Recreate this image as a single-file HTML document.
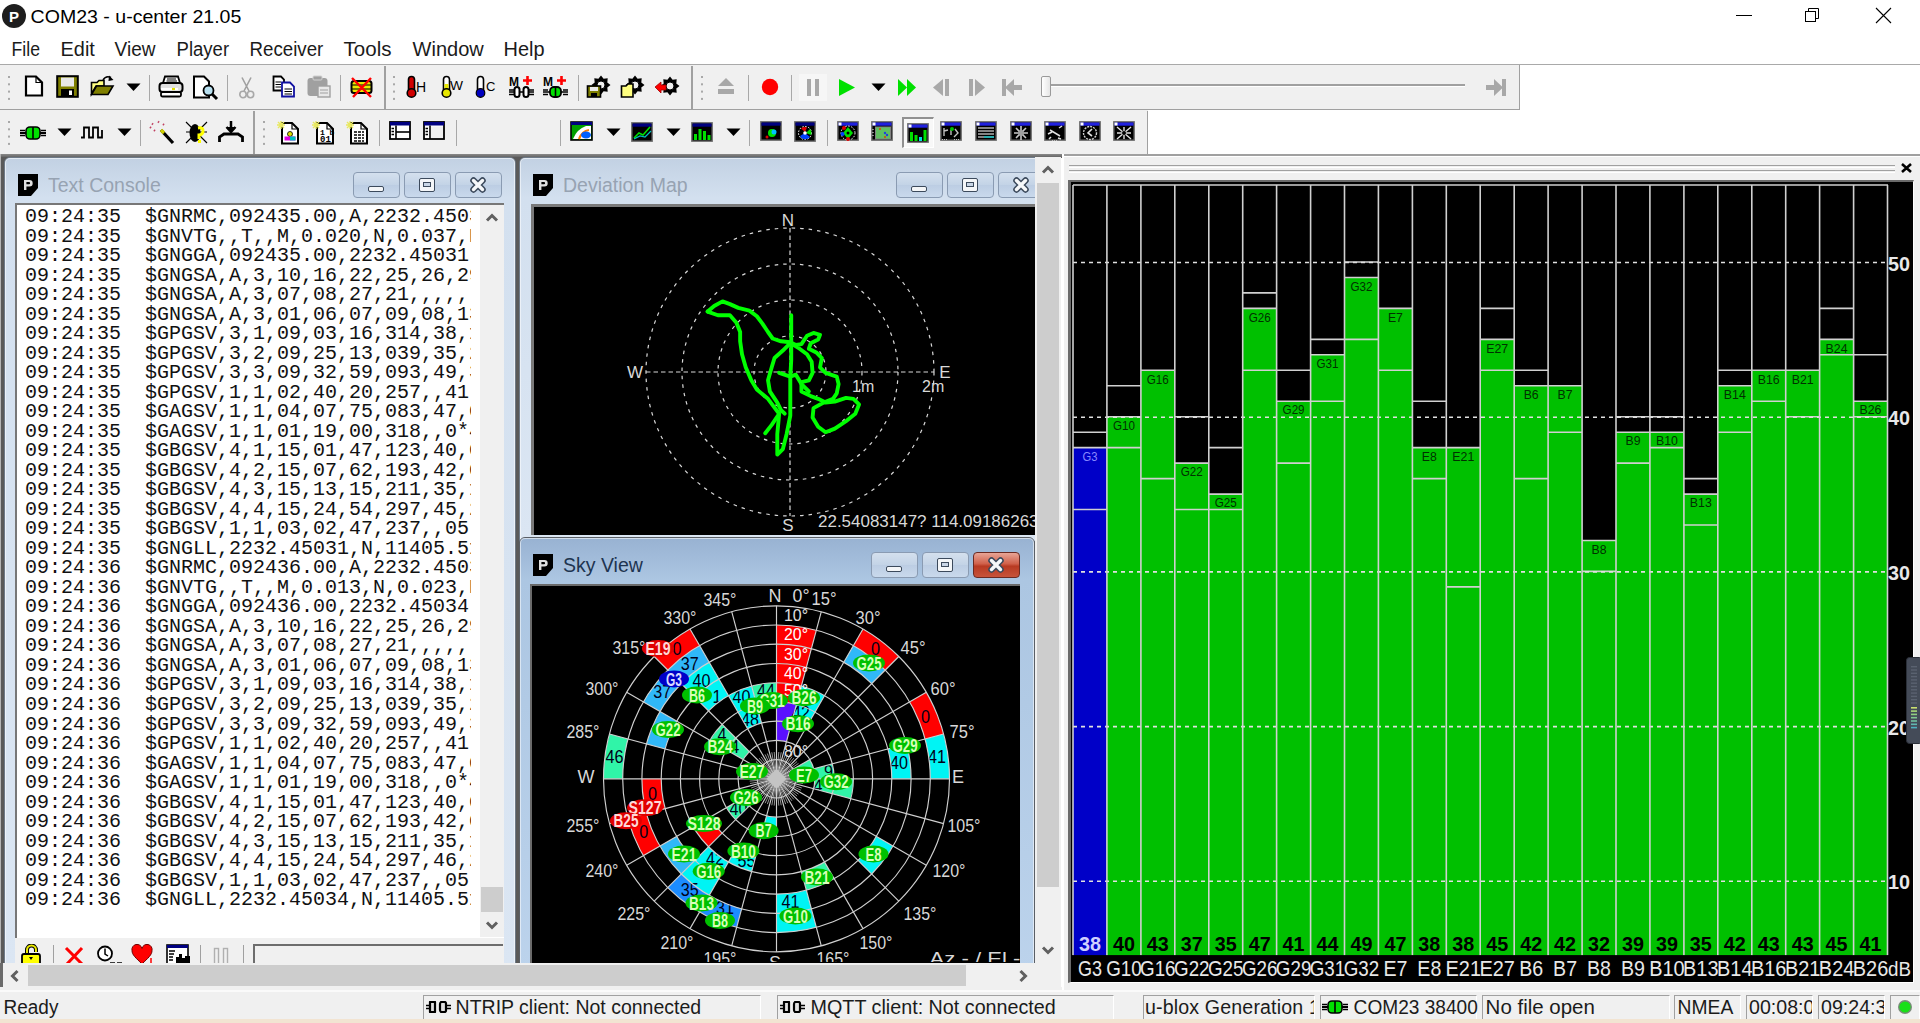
<!DOCTYPE html><html><head><meta charset="utf-8"><style>
*{margin:0;padding:0;box-sizing:border-box}
html,body{width:1920px;height:1023px;overflow:hidden;background:#fff;font-family:"Liberation Sans",sans-serif;color:#000}
.a{position:absolute}
.t{position:absolute;white-space:pre;line-height:1}
</style></head><body><svg class="a" style="left:0;top:0" width="32" height="32"><circle cx="14" cy="16" r="12" fill="#1e1e1e"/><text x="14" y="21.5" font-size="15" font-weight="bold" fill="#fff" text-anchor="middle" font-family="Liberation Sans">P</text></svg>
<svg class="a" style="left:28.4px;top:1.7px;overflow:visible" width="216.7" height="26.6"><text x="2.6" y="20.9" font-size="19" font-family="Liberation Sans" font-weight="normal" fill="#000" textLength="210.7" lengthAdjust="spacingAndGlyphs">COM23 - u-center 21.05</text></svg>
<div class="a" style="left:1736px;top:15px;width:16px;height:1px;background:#000"></div>
<svg class="a" style="left:1800px;top:4px" width="26" height="24"><rect x="5.5" y="7.5" width="10" height="10" fill="none" stroke="#000"/><path d="M8.5 7.5V4.5H18.5V14.5H15.5" fill="none" stroke="#000"/></svg>
<svg class="a" style="left:1872px;top:4px" width="24" height="24"><path d="M4 4L19 19M19 4L4 19" stroke="#000" stroke-width="1.1"/></svg>
<svg class="a" style="left:8.7px;top:33.5px;overflow:visible" width="34.4" height="27.3"><text x="2.6" y="21.5" font-size="19.5" font-family="Liberation Sans" font-weight="normal" fill="#1b1b1b" textLength="28.4" lengthAdjust="spacingAndGlyphs">File</text></svg>
<svg class="a" style="left:57.5px;top:33.5px;overflow:visible" width="40.3" height="27.3"><text x="2.6" y="21.5" font-size="19.5" font-family="Liberation Sans" font-weight="normal" fill="#1b1b1b" textLength="34.3" lengthAdjust="spacingAndGlyphs">Edit</text></svg>
<svg class="a" style="left:112.2px;top:33.5px;overflow:visible" width="46.9" height="27.3"><text x="2.6" y="21.5" font-size="19.5" font-family="Liberation Sans" font-weight="normal" fill="#1b1b1b" textLength="40.9" lengthAdjust="spacingAndGlyphs">View</text></svg>
<svg class="a" style="left:173.5px;top:33.5px;overflow:visible" width="58.5" height="27.3"><text x="2.6" y="21.5" font-size="19.5" font-family="Liberation Sans" font-weight="normal" fill="#1b1b1b" textLength="52.5" lengthAdjust="spacingAndGlyphs">Player</text></svg>
<svg class="a" style="left:246.8px;top:33.5px;overflow:visible" width="79.7" height="27.3"><text x="2.6" y="21.5" font-size="19.5" font-family="Liberation Sans" font-weight="normal" fill="#1b1b1b" textLength="73.7" lengthAdjust="spacingAndGlyphs">Receiver</text></svg>
<svg class="a" style="left:341.3px;top:33.5px;overflow:visible" width="53.9" height="27.3"><text x="2.6" y="21.5" font-size="19.5" font-family="Liberation Sans" font-weight="normal" fill="#1b1b1b" textLength="47.9" lengthAdjust="spacingAndGlyphs">Tools</text></svg>
<svg class="a" style="left:410.0px;top:33.5px;overflow:visible" width="77.2" height="27.3"><text x="2.6" y="21.5" font-size="19.5" font-family="Liberation Sans" font-weight="normal" fill="#1b1b1b" textLength="71.2" lengthAdjust="spacingAndGlyphs">Window</text></svg>
<svg class="a" style="left:501.2px;top:33.5px;overflow:visible" width="47.0" height="27.3"><text x="2.6" y="21.5" font-size="19.5" font-family="Liberation Sans" font-weight="normal" fill="#1b1b1b" textLength="41.0" lengthAdjust="spacingAndGlyphs">Help</text></svg>
<div class="a" style="left:0px;top:64px;width:1920px;height:1px;background:#a9a9a9"></div>
<div class="a" style="left:0px;top:65px;width:1520px;height:44px;background:#f0f0f0"></div>
<div class="a" style="left:1519px;top:65px;width:1px;height:44px;background:#a0a0a0"></div>
<div class="a" style="left:0px;top:109px;width:1520px;height:1px;background:#a0a0a0"></div>
<div class="a" style="left:0px;top:110px;width:1148px;height:44px;background:#f0f0f0"></div>
<div class="a" style="left:1147px;top:111px;width:1px;height:43px;background:#a0a0a0"></div>
<div class="a" style="left:384px;top:66px;width:2px;height:43px;background:#a0a0a0"></div>
<div class="a" style="left:691px;top:66px;width:2px;height:43px;background:#a0a0a0"></div>
<div class="a" style="left:253px;top:111px;width:2px;height:43px;background:#a0a0a0"></div>
<div class="a" style="left:0px;top:154px;width:1062px;height:4px;background:linear-gradient(#8a8a8a,#5a5a5a)"></div>
<div class="a" style="left:1062px;top:154px;width:858px;height:2px;background:#a0a0a0"></div>
<div class="a" style="left:1062px;top:156px;width:858px;height:1px;background:#fff"></div>
<svg class="a" style="left:7px;top:75px" width="5" height="28"><rect x="1" y="1.0" width="2" height="2" fill="#a8a8a8"/><rect x="1" y="8.3" width="2" height="2" fill="#a8a8a8"/><rect x="1" y="15.6" width="2" height="2" fill="#a8a8a8"/><rect x="1" y="22.9" width="2" height="2" fill="#a8a8a8"/></svg>
<svg class="a" style="left:24px;top:75px" width="20" height="22"><path d="M2 1.5H12L18 7.5V20.5H2Z" fill="#fff" stroke="#000" stroke-width="2.2" stroke-linejoin="miter"/><path d="M12 1.5V7.5H18" fill="none" stroke="#000" stroke-width="1.2"/></svg>
<svg class="a" style="left:56px;top:75px" width="23" height="23"><rect x="1.2" y="1.2" width="20.6" height="20.6" fill="#808000" stroke="#000" stroke-width="2"/><rect x="5" y="2.5" width="13" height="9" fill="#e8e8e8"/><rect x="5" y="14" width="13" height="7" fill="#000"/><rect x="13" y="15.5" width="3" height="4.5" fill="#fff"/></svg>
<svg class="a" style="left:90px;top:74px" width="26" height="23"><path d="M1.5 8.5H7L9 6.5H14V12H6L1.5 20Z" fill="#ffff80" stroke="#000" stroke-width="1.6"/><path d="M1.5 20.5L6.5 12H23L18 20.5Z" fill="#808000" stroke="#000" stroke-width="1.6"/><path d="M13 6Q16 1 21 3.5" fill="none" stroke="#000" stroke-width="1.5"/><path d="M19 1.5L23.5 6L18.5 7Z" fill="#000"/></svg>
<svg class="a" style="left:126px;top:83px" width="15" height="9"><path d="M0.5 0.5H14.5L7.5 8Z" fill="#000"/></svg>
<div class="a" style="left:149px;top:75px;width:1px;height:26px;background:#a8a8a8"></div>
<svg class="a" style="left:158px;top:75px" width="27" height="23"><path d="M7 1.5H20L22 8H5Z" fill="#fff" stroke="#000" stroke-width="1.8"/><path d="M9 4H18M8.5 6H19" stroke="#000" stroke-width="1"/><rect x="1.5" y="8" width="23" height="9" rx="3" fill="#e0e0e0" stroke="#000" stroke-width="2"/><path d="M3 14H20" stroke="#fff" stroke-width="2.2"/><path d="M14 14H17" stroke="#e0e000" stroke-width="2.2"/><rect x="3" y="17" width="20" height="4.5" rx="1.5" fill="#fff" stroke="#000" stroke-width="1.8"/></svg>
<svg class="a" style="left:192px;top:75px" width="28" height="26"><path d="M2 1.5H12L17 6.5V22.5H2Z" fill="#fff" stroke="#000" stroke-width="2"/><circle cx="16.5" cy="15.5" r="5" fill="#b8e0f0" stroke="#000" stroke-width="1.8"/><path d="M20 19L25 24" stroke="#000" stroke-width="3"/></svg>
<div class="a" style="left:227px;top:75px;width:1px;height:26px;background:#a8a8a8"></div>
<svg class="a" style="left:238px;top:76px" width="18" height="23"><path d="M4 1.5L11 15M13 1.5L6 15" stroke="#a0a0a0" stroke-width="1.6" fill="none"/><circle cx="5" cy="18.5" r="3.2" fill="none" stroke="#a8a8a8" stroke-width="1.6"/><circle cx="12.5" cy="18.5" r="3.2" fill="none" stroke="#a8a8a8" stroke-width="1.6"/></svg>
<svg class="a" style="left:272px;top:75px" width="26" height="23"><path d="M1.5 1.5H9L12 4.5V15.5H1.5Z" fill="#fff" stroke="#000" stroke-width="1.8"/><path d="M3.5 7H9M3.5 9.5H9M3.5 12H9" stroke="#000" stroke-width="1"/><path d="M10 7.5H18L22 11.5V21.5H10Z" fill="#fff" stroke="#1010a0" stroke-width="1.8"/><path d="M12.5 14H20M12.5 16.5H20M12.5 19H20" stroke="#000" stroke-width="1"/></svg>
<svg class="a" style="left:306px;top:75px" width="26" height="24"><rect x="1.5" y="3" width="20" height="18" rx="3" fill="#a0a0a0"/><rect x="7" y="1" width="9" height="4" rx="1" fill="#a0a0a0" stroke="#d0d0d0"/><rect x="12" y="11" width="12" height="11" fill="#e8e8e8" stroke="#a0a0a0" stroke-width="1.4"/><path d="M14 15H22M14 18H22" stroke="#a0a0a0"/></svg>
<div class="a" style="left:340px;top:75px;width:1px;height:26px;background:#a8a8a8"></div>
<svg class="a" style="left:350px;top:76px" width="24" height="22"><rect x="1.5" y="5" width="20" height="12" rx="2.5" fill="#e8e800" stroke="#000" stroke-width="2"/><path d="M2 9H21M2 13H21" stroke="#000" stroke-width="1.2"/><path d="M2 2L21 21M21 2L3 21" stroke="#ff0000" stroke-width="2.4"/></svg>
<svg class="a" style="left:392px;top:75px" width="5" height="28"><rect x="1" y="1.0" width="2" height="2" fill="#a8a8a8"/><rect x="1" y="8.3" width="2" height="2" fill="#a8a8a8"/><rect x="1" y="15.6" width="2" height="2" fill="#a8a8a8"/><rect x="1" y="22.9" width="2" height="2" fill="#a8a8a8"/></svg>
<svg class="a" style="left:404px;top:75px" width="24" height="24"><rect x="4.5" y="1.5" width="6" height="17" rx="3" fill="#d00000" stroke="#000" stroke-width="1.6"/><circle cx="7.5" cy="18" r="4.3" fill="#d00000" stroke="#000" stroke-width="1.6"/><text x="12" y="17" font-size="14" font-family="Liberation Sans" fill="#000">H</text></svg>
<svg class="a" style="left:439px;top:75px" width="26" height="24"><rect x="4.5" y="1.5" width="6" height="17" rx="3" fill="#fff" stroke="#000" stroke-width="1.6"/><rect x="5.5" y="9" width="4" height="9" fill="#e8e800"/><circle cx="7.5" cy="18" r="4.3" fill="#e8e800" stroke="#000" stroke-width="1.6"/><text x="11" y="15" font-size="13" font-family="Liberation Sans" fill="#000" textLength="13" lengthAdjust="spacingAndGlyphs">W</text></svg>
<svg class="a" style="left:473px;top:75px" width="24" height="24"><rect x="4.5" y="1.5" width="6" height="17" rx="3" fill="#fff" stroke="#000" stroke-width="1.6"/><circle cx="7.5" cy="18" r="4.3" fill="#0000c0" stroke="#000" stroke-width="1.2"/><text x="13" y="16" font-size="13" font-family="Liberation Sans" fill="#000">C</text></svg>
<svg class="a" style="left:509px;top:75px" width="26" height="24"><text x="0" y="11" font-size="12" font-weight="bold" font-family="Liberation Sans" fill="#000">M</text><path d="M18.5 1V10M14 5.5H23" stroke="#ff0000" stroke-width="2.6"/><path d="M0 17H25M0 15H5M0 19.5H5M20 15H25M20 19.5H25" stroke="#000" stroke-width="1.3"/><rect x="5.5" y="12" width="5" height="10" rx="2.5" fill="#fff" stroke="#000" stroke-width="2"/><rect x="14.5" y="12" width="5" height="10" rx="2.5" fill="#fff" stroke="#000" stroke-width="2"/></svg>
<svg class="a" style="left:543px;top:75px" width="26" height="24"><text x="0" y="11" font-size="12" font-weight="bold" font-family="Liberation Sans" fill="#000">M</text><path d="M18.5 1V10M14 5.5H23" stroke="#ff0000" stroke-width="2.6"/><path d="M0 17H25M0 15H5M0 19.5H5M20 15H25M20 19.5H25" stroke="#000" stroke-width="1.3"/><rect x="7" y="12" width="11" height="10" rx="4" fill="#00e000" stroke="#000" stroke-width="1.8"/><path d="M12.5 12V22" stroke="#000" stroke-width="1.6"/></svg>
<div class="a" style="left:578px;top:75px;width:1px;height:26px;background:#a8a8a8"></div>
<svg class="a" style="left:586px;top:75px" width="26" height="24"><polygon points="24.5,10.0 21.3,12.6 21.7,16.7 17.6,16.3 15.0,19.5 12.4,16.3 8.3,16.7 8.7,12.6 5.5,10.0 8.7,7.4 8.3,3.3 12.4,3.7 15.0,0.5 17.6,3.7 21.7,3.3 21.3,7.4" fill="#000"/><circle cx="15" cy="10" r="4.0" fill="#f0f0f0" stroke="#000" stroke-width="1"/><rect x="1.5" y="11" width="13" height="11" fill="#808000" stroke="#000" stroke-width="1.6"/><rect x="4" y="12" width="8" height="4" fill="#e8e8e8"/><rect x="5" y="18" width="6" height="4" fill="#000"/></svg>
<svg class="a" style="left:620px;top:75px" width="26" height="24"><polygon points="24.5,10.0 21.3,12.6 21.7,16.7 17.6,16.3 15.0,19.5 12.4,16.3 8.3,16.7 8.7,12.6 5.5,10.0 8.7,7.4 8.3,3.3 12.4,3.7 15.0,0.5 17.6,3.7 21.7,3.3 21.3,7.4" fill="#000"/><circle cx="15" cy="10" r="4.0" fill="#f0f0f0" stroke="#000" stroke-width="1"/><path d="M1.5 11H6L8 9H13V22H1.5Z" fill="#ffff80" stroke="#000" stroke-width="1.6"/></svg>
<svg class="a" style="left:654px;top:75px" width="28" height="24"><polygon points="25.5,11.0 22.3,13.6 22.7,17.7 18.6,17.3 16.0,20.5 13.4,17.3 9.3,17.7 9.7,13.6 6.5,11.0 9.7,8.4 9.3,4.3 13.4,4.7 16.0,1.5 18.6,4.7 22.7,4.3 22.3,8.4" fill="#000"/><circle cx="16" cy="11" r="4.0" fill="#f0f0f0" stroke="#000" stroke-width="1"/><path d="M1 12L7 7V10H12V15H7V18Z" fill="#ff0000" stroke="#a00000" stroke-width="0.8"/></svg>
<svg class="a" style="left:700px;top:75px" width="5" height="28"><rect x="1" y="1.0" width="2" height="2" fill="#a8a8a8"/><rect x="1" y="8.3" width="2" height="2" fill="#a8a8a8"/><rect x="1" y="15.6" width="2" height="2" fill="#a8a8a8"/><rect x="1" y="22.9" width="2" height="2" fill="#a8a8a8"/></svg>
<svg class="a" style="left:717px;top:77px" width="20" height="19"><path d="M1 9L9 1L17 9Z" fill="#a8a8a8"/><rect x="1" y="12" width="16" height="5" fill="#a8a8a8"/></svg>
<div class="a" style="left:748px;top:75px;width:1px;height:26px;background:#a8a8a8"></div>
<svg class="a" style="left:760px;top:77px" width="20" height="20"><circle cx="10" cy="10" r="8.2" fill="#ff0000"/></svg>
<div class="a" style="left:791px;top:75px;width:1px;height:26px;background:#a8a8a8"></div>
<div class="a" style="left:799px;top:74px;width:28px;height:27px;background:#f6f6f6"></div>
<svg class="a" style="left:805px;top:78px" width="18" height="19"><rect x="2" y="1" width="4" height="17" fill="#a8a8a8"/><rect x="10" y="1" width="4" height="17" fill="#a8a8a8"/></svg>
<svg class="a" style="left:838px;top:78px" width="20" height="20"><path d="M1 1L17 9.5L1 18Z" fill="#00e000"/></svg>
<svg class="a" style="left:871px;top:83px" width="15" height="9"><path d="M0.5 0.5H14.5L7.5 8Z" fill="#000"/></svg>
<svg class="a" style="left:897px;top:78px" width="22" height="20"><path d="M1 1L10 9.5L1 18Z" fill="#00e000"/><path d="M10 1L19 9.5L10 18Z" fill="#00e000"/></svg>
<svg class="a" style="left:932px;top:78px" width="20" height="20"><path d="M11 1L1 9.5L11 18Z" fill="#a8a8a8"/><rect x="13" y="1" width="4" height="17" fill="#a8a8a8"/></svg>
<svg class="a" style="left:968px;top:78px" width="20" height="20"><rect x="1" y="1" width="4" height="17" fill="#a8a8a8"/><path d="M7 1L17 9.5L7 18Z" fill="#a8a8a8"/></svg>
<svg class="a" style="left:1001px;top:78px" width="24" height="20"><rect x="1" y="1" width="4" height="17" fill="#a8a8a8"/><path d="M13 1L4 9.5L13 18Z" fill="#a8a8a8"/><rect x="11" y="7" width="10" height="5" fill="#a8a8a8"/></svg>
<div class="a" style="left:1050px;top:84px;width:415px;height:3px;background:#a0a0a0;border-bottom:1px solid #fff"></div>
<div class="a" style="left:1041px;top:76px;width:10px;height:21px;background:linear-gradient(90deg,#fff,#e6e6e6);border:1px solid #9a9a9a;border-radius:2px"></div>
<svg class="a" style="left:1483px;top:78px" width="24" height="20"><rect x="3" y="7" width="10" height="5" fill="#a8a8a8"/><path d="M11 1L20 9.5L11 18Z" fill="#a8a8a8"/><rect x="19" y="1" width="4" height="17" fill="#a8a8a8"/></svg>
<svg class="a" style="left:7px;top:120px" width="5" height="28"><rect x="1" y="1.0" width="2" height="2" fill="#a8a8a8"/><rect x="1" y="8.3" width="2" height="2" fill="#a8a8a8"/><rect x="1" y="15.6" width="2" height="2" fill="#a8a8a8"/><rect x="1" y="22.9" width="2" height="2" fill="#a8a8a8"/></svg>
<svg class="a" style="left:20px;top:126px" width="26" height="14"><path d="M0 7H26" stroke="#000" stroke-width="2"/><path d="M0 4.5H5M0 9.5H5M21 4.5H26M21 9.5H26" stroke="#000" stroke-width="1.3"/><rect x="6" y="1" width="14" height="12" rx="4" fill="#00e000" stroke="#000" stroke-width="1.6"/><path d="M13 1V13" stroke="#000" stroke-width="1.6"/></svg>
<svg class="a" style="left:57px;top:128px" width="15" height="9"><path d="M0.5 0.5H14.5L7.5 8Z" fill="#000"/></svg>
<svg class="a" style="left:80px;top:126px" width="24" height="13"><path d="M1 11.5H4V1.5H9V11.5H13V1.5H18V11.5H22V4" fill="none" stroke="#000" stroke-width="1.8"/></svg>
<svg class="a" style="left:117px;top:128px" width="15" height="9"><path d="M0.5 0.5H14.5L7.5 8Z" fill="#000"/></svg>
<div class="a" style="left:140px;top:120px;width:1px;height:26px;background:#a8a8a8"></div>
<svg class="a" style="left:149px;top:120px" width="27" height="25"><path d="M12 10L24 23" stroke="#000" stroke-width="3.2"/><path d="M12 10L15 13" stroke="#d0d000" stroke-width="3.2"/><path d="M3 3.5l1 1M9 1.5l1 1M5 10l1 1M14 4l1 1M1 7l1 1" stroke="#c04060" stroke-width="1.8"/></svg>
<svg class="a" style="left:185px;top:120px" width="24" height="25"><path d="M1 2L22 23M22 2L1 23M1 12H22" stroke="#000" stroke-width="1.1"/><ellipse cx="10" cy="13" rx="5.5" ry="9" fill="#000"/><path d="M13 8Q19 7 18 12Q17 15 14 15V19" fill="none" stroke="#ffff00" stroke-width="3"/><rect x="13" y="20" width="3" height="3" fill="#ffff00"/></svg>
<svg class="a" style="left:218px;top:120px" width="27" height="24"><path d="M13 1V11M8.5 7L13 12L17.5 7" fill="#000" stroke="#000" stroke-width="2.5"/><path d="M1.5 22V17L6 14H20L24.5 17V22" fill="none" stroke="#000" stroke-width="2.8"/></svg>
<svg class="a" style="left:262px;top:120px" width="5" height="28"><rect x="1" y="1.0" width="2" height="2" fill="#a8a8a8"/><rect x="1" y="8.3" width="2" height="2" fill="#a8a8a8"/><rect x="1" y="15.6" width="2" height="2" fill="#a8a8a8"/><rect x="1" y="22.9" width="2" height="2" fill="#a8a8a8"/></svg>
<svg class="a" style="left:276px;top:120px" width="26" height="25"><path d="M6 3H16L22 9V23.5H6Z" fill="#fff" stroke="#000" stroke-width="2"/><path d="M16 3V9H22" fill="none" stroke="#000" stroke-width="1.2"/><path d="M1 5L9 5M5 1V9M2 2L8 8M8 2L2 8" stroke="#e8e860" stroke-width="1.4"/><circle cx="14" cy="14" r="2.5" fill="#e0e000" stroke="#000" stroke-width=".8"/><rect x="8.5" y="16.5" width="11" height="4" fill="#e000e0"/><rect x="14" y="16.5" width="5.5" height="4" fill="#00c0c0"/></svg>
<svg class="a" style="left:311px;top:120px" width="26" height="25"><path d="M6 3H16L22 9V23.5H6Z" fill="#fff" stroke="#000" stroke-width="2"/><path d="M16 3V9H22" fill="none" stroke="#000" stroke-width="1.2"/><path d="M1 5L9 5M5 1V9M2 2L8 8M8 2L2 8" stroke="#e8e860" stroke-width="1.4"/><text x="9" y="15" font-size="8" font-weight="bold" font-family="Liberation Mono">1 b</text><text x="9" y="22" font-size="9" font-weight="bold" font-family="Liberation Mono">01</text></svg>
<svg class="a" style="left:345px;top:120px" width="26" height="25"><path d="M6 3H16L22 9V23.5H6Z" fill="#fff" stroke="#000" stroke-width="2"/><path d="M16 3V9H22" fill="none" stroke="#000" stroke-width="1.2"/><path d="M1 5L9 5M5 1V9M2 2L8 8M8 2L2 8" stroke="#e8e860" stroke-width="1.4"/><path d="M9 12H19M9 15H19M9 18H19M9 21H19" stroke="#000" stroke-width="1.6" stroke-dasharray="3 1"/></svg>
<div class="a" style="left:379px;top:120px;width:1px;height:26px;background:#a8a8a8"></div>
<svg class="a" style="left:389px;top:121px" width="23" height="20"><rect x="1" y="1" width="20" height="17" fill="#fff" stroke="#000" stroke-width="1.8"/><rect x="1" y="1" width="20" height="3.5" fill="#000080"/><path d="M7 4.5V18" stroke="#000" stroke-width="1.6"/><path d="M2.5 7.5H5M2.5 10.5H5M2.5 13.5H5" stroke="#000" stroke-width="1.4"/><path d="M7 11H21" stroke="#000" stroke-width="1.6"/></svg>
<svg class="a" style="left:423px;top:121px" width="23" height="20"><rect x="1" y="1" width="20" height="17" fill="#fff" stroke="#000" stroke-width="1.8"/><rect x="1" y="1" width="20" height="3.5" fill="#000080"/><path d="M7 4.5V18" stroke="#000" stroke-width="1.6"/><path d="M2.5 7.5H5M2.5 10.5H5M2.5 13.5H5" stroke="#000" stroke-width="1.4"/><rect x="8" y="5.5" width="12" height="11.5" fill="#f0f0f0"/></svg>
<div class="a" style="left:456px;top:120px;width:1px;height:26px;background:#a8a8a8"></div>
<div class="a" style="left:560px;top:120px;width:1px;height:26px;background:#a8a8a8"></div>
<svg class="a" style="left:570px;top:121px" width="24" height="21"><rect x="1" y="1" width="21" height="18" fill="#00a000" stroke="#000" stroke-width="1.6"/><rect x="1" y="1" width="21" height="3" fill="#000080"/><path d="M3 18Q7 8 16 5L21 5V18Z" fill="#fff"/><path d="M9 18Q12 10 19 9" stroke="#ff8000" stroke-width="2.2" fill="none"/><ellipse cx="16" cy="14" rx="5" ry="3.5" fill="#0060ff"/></svg>
<svg class="a" style="left:606px;top:128px" width="15" height="9"><path d="M0.5 0.5H14.5L7.5 8Z" fill="#000"/></svg>
<svg class="a" style="left:631px;top:122px" width="22" height="20"><rect x="0.8" y="0.8" width="20.4" height="18.4" fill="#000" stroke="#707070" stroke-width="1.4"/><rect x="1.5" y="1.5" width="19" height="3.2" fill="#000080"/><path d="M3 16L8 11L12 13L19 5" stroke="#00e000" stroke-width="1.6" fill="none"/><path d="M3 17L9 14L14 15L20 9" stroke="#00c0c0" stroke-width="1.2" fill="none"/></svg>
<svg class="a" style="left:666px;top:128px" width="15" height="9"><path d="M0.5 0.5H14.5L7.5 8Z" fill="#000"/></svg>
<svg class="a" style="left:691px;top:122px" width="22" height="20"><rect x="0.8" y="0.8" width="20.4" height="18.4" fill="#000" stroke="#707070" stroke-width="1.4"/><rect x="1.5" y="1.5" width="19" height="3.2" fill="#000080"/><rect x="3" y="12" width="3" height="6" fill="#00e000"/><rect x="7.5" y="7" width="3" height="11" fill="#00e000"/><rect x="12" y="9" width="3" height="9" fill="#00e000"/><rect x="16.5" y="13" width="3" height="5" fill="#00e000"/></svg>
<svg class="a" style="left:726px;top:128px" width="15" height="9"><path d="M0.5 0.5H14.5L7.5 8Z" fill="#000"/></svg>
<div class="a" style="left:749px;top:120px;width:1px;height:26px;background:#a8a8a8"></div>
<svg class="a" style="left:760px;top:121px" width="22" height="20"><rect x="0.8" y="0.8" width="20.4" height="18.4" fill="#000" stroke="#707070" stroke-width="1.4"/><rect x="1.5" y="1.5" width="19" height="3.2" fill="#000080"/><circle cx="12" cy="12" r="4" fill="#00e000"/><circle cx="14" cy="11" r="2.5" fill="#00c0ff"/><circle cx="7" cy="16" r="1.5" fill="#e00000"/></svg>
<svg class="a" style="left:794px;top:121px" width="22" height="21"><rect x="0.8" y="0.8" width="20.4" height="19.4" fill="#000" stroke="#707070" stroke-width="1.4"/><rect x="1.5" y="1.5" width="19" height="3.2" fill="#000080"/><circle cx="11" cy="12" r="6.5" fill="none" stroke="#fff" stroke-dasharray="1.5 1.5"/><path d="M7 7.5A6 6 0 0 1 13 6.5L11 11Z" fill="#e00000"/><path d="M6 15A6 6 0 0 0 16 16L11 12Z" fill="#0040ff"/><path d="M16 8A6 6 0 0 1 17 14L12 12Z" fill="#00e000"/><circle cx="11" cy="12" r="1.8" fill="#fff"/></svg>
<div class="a" style="left:827px;top:120px;width:1px;height:26px;background:#a8a8a8"></div>
<svg class="a" style="left:837px;top:121px" width="22" height="20"><rect x="0.8" y="0.8" width="20.4" height="18.4" fill="#000" stroke="#707070" stroke-width="1.4"/><rect x="1.5" y="1.5" width="19" height="3.2" fill="#2020e0"/><rect x="1.5" y="1.5" width="3" height="3" fill="#fff"/><circle cx="11" cy="12" r="7" fill="none" stroke="#fff" stroke-dasharray="1.5 1.5"/><path d="M11 6L16 12L11 18L6 12Z" fill="#00e000"/><circle cx="11" cy="12" r="1.5" fill="#000"/><circle cx="7" cy="7" r="2" fill="#e00000"/><circle cx="5.5" cy="13" r="2" fill="#0040ff"/><circle cx="11" cy="18" r="2" fill="#e00000"/></svg>
<svg class="a" style="left:871px;top:121px" width="22" height="20"><rect x="0.8" y="0.8" width="20.4" height="18.4" fill="#000" stroke="#707070" stroke-width="1.4"/><rect x="1.5" y="1.5" width="19" height="3.2" fill="#2020e0"/><rect x="1.5" y="1.5" width="3" height="3" fill="#fff"/><rect x="4.5" y="6" width="15" height="12" fill="#60c060" stroke="#808080"/><circle cx="9" cy="8" r="1" fill="#e04000"/><circle cx="14" cy="12" r="1.2" fill="#2040e0"/><circle cx="16" cy="14" r="1.2" fill="#2040e0"/><circle cx="14" cy="16" r="1" fill="#e04000"/><path d="M2 8V9M2 11V12M2 14V15" stroke="#fff"/></svg>
<div class="a" style="left:902px;top:117px;width:32px;height:31px;border-top:2px solid #909090;border-left:2px solid #909090;border-right:1px solid #fff;border-bottom:1px solid #fff;background:#f8f8f8"></div>
<svg class="a" style="left:907px;top:123px" width="22" height="20"><rect x="0.8" y="0.8" width="20.4" height="18.4" fill="#000" stroke="#707070" stroke-width="1.4"/><rect x="1.5" y="1.5" width="19" height="3.2" fill="#2020e0"/><rect x="1.5" y="1.5" width="3" height="3" fill="#fff"/><rect x="3" y="9" width="3" height="9" fill="#00e000"/><rect x="7.5" y="12" width="3" height="6" fill="#00e000"/><rect x="12" y="14" width="3" height="4" fill="#00e0e0"/><rect x="16.5" y="7" width="3" height="11" fill="#00e000"/></svg>
<svg class="a" style="left:940px;top:121px" width="22" height="20"><rect x="0.8" y="0.8" width="20.4" height="18.4" fill="#000" stroke="#707070" stroke-width="1.4"/><rect x="1.5" y="1.5" width="19" height="3.2" fill="#2020e0"/><rect x="1.5" y="1.5" width="3" height="3" fill="#fff"/><path d="M4 7V15M4 10L8 9M15 8L18 12L14 16M11 9V14" stroke="#c0c0c0" stroke-width="1.4" fill="none"/><circle cx="12" cy="8" r="2" fill="#00c000"/><path d="M2 18.5H8M14 18.5H20" stroke="#c0c0c0" stroke-dasharray="1 1"/></svg>
<svg class="a" style="left:975px;top:121px" width="22" height="20"><rect x="0.8" y="0.8" width="20.4" height="18.4" fill="#000" stroke="#707070" stroke-width="1.4"/><rect x="1.5" y="1.5" width="19" height="3.2" fill="#2020e0"/><rect x="1.5" y="1.5" width="3" height="3" fill="#fff"/><path d="M3 7H19M3 10H19M3 13H19M3 16H19" stroke="#b0b0b0" stroke-width="1.4"/><path d="M9 16H19" stroke="#00c0c0" stroke-width="1.4"/></svg>
<svg class="a" style="left:1010px;top:121px" width="22" height="20"><rect x="0.8" y="0.8" width="20.4" height="18.4" fill="#000" stroke="#707070" stroke-width="1.4"/><rect x="1.5" y="1.5" width="19" height="3.2" fill="#2020e0"/><rect x="1.5" y="1.5" width="3" height="3" fill="#fff"/><path d="M11 5V19M4 12H18M6 7L16 17M16 7L6 17" stroke="#c8c8c8" stroke-width="1.6"/><circle cx="11" cy="12" r="3" fill="#a0a0a0"/></svg>
<svg class="a" style="left:1044px;top:121px" width="22" height="20"><rect x="0.8" y="0.8" width="20.4" height="18.4" fill="#000" stroke="#707070" stroke-width="1.4"/><rect x="1.5" y="1.5" width="19" height="3.2" fill="#2020e0"/><rect x="1.5" y="1.5" width="3" height="3" fill="#fff"/><path d="M6 9L16 15M4 13L8 11M15 7L18 5M14 17L17 18M7 16L5 18" stroke="#e0e0e0" stroke-width="1.5"/><path d="M8 19.5H14" stroke="#c0c0c0" stroke-dasharray="1 1"/></svg>
<svg class="a" style="left:1079px;top:121px" width="22" height="20"><rect x="0.8" y="0.8" width="20.4" height="18.4" fill="#000" stroke="#707070" stroke-width="1.4"/><rect x="1.5" y="1.5" width="19" height="3.2" fill="#2020e0"/><rect x="1.5" y="1.5" width="3" height="3" fill="#fff"/><circle cx="11" cy="12" r="6.5" fill="none" stroke="#d0d0d0" stroke-width="1.4" stroke-dasharray="2 1"/><path d="M13 8L9 12L13 15" stroke="#e0e0e0" stroke-width="1.6" fill="none"/></svg>
<svg class="a" style="left:1113px;top:121px" width="22" height="20"><rect x="0.8" y="0.8" width="20.4" height="18.4" fill="#000" stroke="#707070" stroke-width="1.4"/><rect x="1.5" y="1.5" width="19" height="3.2" fill="#2020e0"/><rect x="1.5" y="1.5" width="3" height="3" fill="#fff"/><path d="M4 6L18 18M18 6L4 18M4 12H18M11 6V18" stroke="#e0e0e0" stroke-width="1.4"/><circle cx="11" cy="12" r="2" fill="#000"/></svg>
<div class="a" style="left:0px;top:157px;width:1035px;height:806px;background:#5a5a5a"></div>
<div class="a" style="left:0px;top:154px;width:1px;height:835px;background:#b4b4b4"></div>
<div class="a" style="left:4px;top:157px;width:512px;height:820px;background:linear-gradient(#c2d1e3,#d3e0ef 40px,#dbe6f3);border:1px solid #6e7a88;border-radius:6px 6px 0 0"></div>
<div class="a" style="left:5px;top:158px;width:510px;height:819px;border:1px solid rgba(255,255,255,.55);border-bottom:none;border-radius:5px 5px 0 0"></div>
<svg class="a" style="left:17px;top:173px" width="22" height="24"><path d="M1 1H21V15L14 23H1Z" fill="#000"/><path d="M7 7h5.5a3.2 3.2 0 0 1 0 6.4H9.4V17H7Z M9.4 9.1V11.3h2.6a1.1 1.1 0 0 0 0-2.2Z" fill="#e0e0e0" fill-rule="evenodd"/></svg>
<div class="t" style="left:48px;top:176px;font-size:19.5px;color:#97a3b2">Text Console</div>
<div class="a" style="left:353px;top:172px;width:47px;height:26px;border:1px solid #8a9bb2;border-radius:4px;background:linear-gradient(#d4e0ee,#c3d3e6 50%,#bccde3 51%,#c9d9ec)"></div>
<div class="a" style="left:368px;top:186px;width:16px;height:6px;background:#f4f6f8;border:1px solid #3c4a5c;border-radius:2px"></div>
<div class="a" style="left:404px;top:172px;width:47px;height:26px;border:1px solid #8a9bb2;border-radius:4px;background:linear-gradient(#d4e0ee,#c3d3e6 50%,#bccde3 51%,#c9d9ec)"></div>
<div class="a" style="left:419px;top:178px;width:16px;height:14px;background:#f4f6f8;border:1px solid #3c4a5c;border-radius:2px"></div>
<div class="a" style="left:423px;top:182px;width:8px;height:5px;background:#c9d6e6;border:1px solid #3c4a5c"></div>
<div class="a" style="left:455px;top:172px;width:47px;height:26px;border:1px solid #8a9bb2;border-radius:4px;background:linear-gradient(#d4e0ee,#c3d3e6 50%,#bccde3 51%,#c9d9ec)"></div>
<svg class="a" style="left:468px;top:176px" width="20" height="18"><path d="M5.5 4.5L14.5 13.5M14.5 4.5L5.5 13.5" stroke="#3c4a5c" stroke-width="6.5" stroke-linecap="round"/><path d="M5.5 4.5L14.5 13.5M14.5 4.5L5.5 13.5" stroke="#f6f8fa" stroke-width="3.4" stroke-linecap="round"/></svg>
<div class="a" style="left:15px;top:203px;width:489px;height:735px;background:#fff;border-top:2px solid #777;border-left:2px solid #777"></div>
<div class="a" style="left:17px;top:207px;width:454px;height:730px;overflow:hidden">
<div class="t" style="left:8px;top:0px;font-family:'Liberation Mono',monospace;font-size:20px;color:#111">09:24:35  $GNRMC,092435.00,A,2232.45031,N</div>
<div class="t" style="left:8px;top:20px;font-family:'Liberation Mono',monospace;font-size:20px;color:#111">09:24:35  $GNVTG,,T,,M,0.020,N,0.037,K,A*3</div>
<div class="t" style="left:8px;top:39px;font-family:'Liberation Mono',monospace;font-size:20px;color:#111">09:24:35  $GNGGA,092435.00,2232.45031,N,1</div>
<div class="t" style="left:8px;top:59px;font-family:'Liberation Mono',monospace;font-size:20px;color:#111">09:24:35  $GNGSA,A,3,10,16,22,25,26,29,3</div>
<div class="t" style="left:8px;top:78px;font-family:'Liberation Mono',monospace;font-size:20px;color:#111">09:24:35  $GNGSA,A,3,07,08,27,21,,,,,,,,</div>
<div class="t" style="left:8px;top:98px;font-family:'Liberation Mono',monospace;font-size:20px;color:#111">09:24:35  $GNGSA,A,3,01,06,07,09,08,13,1</div>
<div class="t" style="left:8px;top:117px;font-family:'Liberation Mono',monospace;font-size:20px;color:#111">09:24:35  $GPGSV,3,1,09,03,16,314,38,10,</div>
<div class="t" style="left:8px;top:137px;font-family:'Liberation Mono',monospace;font-size:20px;color:#111">09:24:35  $GPGSV,3,2,09,25,13,039,35,26,</div>
<div class="t" style="left:8px;top:156px;font-family:'Liberation Mono',monospace;font-size:20px;color:#111">09:24:35  $GPGSV,3,3,09,32,59,093,49,31,</div>
<div class="t" style="left:8px;top:176px;font-family:'Liberation Mono',monospace;font-size:20px;color:#111">09:24:35  $GPGSV,1,1,02,40,20,257,,41,1</div>
<div class="t" style="left:8px;top:195px;font-family:'Liberation Mono',monospace;font-size:20px;color:#111">09:24:35  $GAGSV,1,1,04,07,75,083,47,08,</div>
<div class="t" style="left:8px;top:215px;font-family:'Liberation Mono',monospace;font-size:20px;color:#111">09:24:35  $GAGSV,1,1,01,19,00,318,,0*47</div>
<div class="t" style="left:8px;top:234px;font-family:'Liberation Mono',monospace;font-size:20px;color:#111">09:24:35  $GBGSV,4,1,15,01,47,123,40,06,</div>
<div class="t" style="left:8px;top:254px;font-family:'Liberation Mono',monospace;font-size:20px;color:#111">09:24:35  $GBGSV,4,2,15,07,62,193,42,08,</div>
<div class="t" style="left:8px;top:273px;font-family:'Liberation Mono',monospace;font-size:20px;color:#111">09:24:35  $GBGSV,4,3,15,13,15,211,35,14,</div>
<div class="t" style="left:8px;top:293px;font-family:'Liberation Mono',monospace;font-size:20px;color:#111">09:24:35  $GBGSV,4,4,15,24,54,297,45,26,</div>
<div class="t" style="left:8px;top:312px;font-family:'Liberation Mono',monospace;font-size:20px;color:#111">09:24:35  $GBGSV,1,1,03,02,47,237,,05,</div>
<div class="t" style="left:8px;top:332px;font-family:'Liberation Mono',monospace;font-size:20px;color:#111">09:24:35  $GNGLL,2232.45031,N,11405.51</div>
<div class="t" style="left:8px;top:351px;font-family:'Liberation Mono',monospace;font-size:20px;color:#111">09:24:36  $GNRMC,092436.00,A,2232.45034,N</div>
<div class="t" style="left:8px;top:371px;font-family:'Liberation Mono',monospace;font-size:20px;color:#111">09:24:36  $GNVTG,,T,,M,0.013,N,0.023,K,A*3</div>
<div class="t" style="left:8px;top:390px;font-family:'Liberation Mono',monospace;font-size:20px;color:#111">09:24:36  $GNGGA,092436.00,2232.45034,N,1</div>
<div class="t" style="left:8px;top:410px;font-family:'Liberation Mono',monospace;font-size:20px;color:#111">09:24:36  $GNGSA,A,3,10,16,22,25,26,29,3</div>
<div class="t" style="left:8px;top:429px;font-family:'Liberation Mono',monospace;font-size:20px;color:#111">09:24:36  $GNGSA,A,3,07,08,27,21,,,,,,,,</div>
<div class="t" style="left:8px;top:449px;font-family:'Liberation Mono',monospace;font-size:20px;color:#111">09:24:36  $GNGSA,A,3,01,06,07,09,08,13,1</div>
<div class="t" style="left:8px;top:468px;font-family:'Liberation Mono',monospace;font-size:20px;color:#111">09:24:36  $GPGSV,3,1,09,03,16,314,38,10,</div>
<div class="t" style="left:8px;top:488px;font-family:'Liberation Mono',monospace;font-size:20px;color:#111">09:24:36  $GPGSV,3,2,09,25,13,039,35,26,</div>
<div class="t" style="left:8px;top:508px;font-family:'Liberation Mono',monospace;font-size:20px;color:#111">09:24:36  $GPGSV,3,3,09,32,59,093,49,31,</div>
<div class="t" style="left:8px;top:527px;font-family:'Liberation Mono',monospace;font-size:20px;color:#111">09:24:36  $GPGSV,1,1,02,40,20,257,,41,1</div>
<div class="t" style="left:8px;top:547px;font-family:'Liberation Mono',monospace;font-size:20px;color:#111">09:24:36  $GAGSV,1,1,04,07,75,083,47,08,</div>
<div class="t" style="left:8px;top:566px;font-family:'Liberation Mono',monospace;font-size:20px;color:#111">09:24:36  $GAGSV,1,1,01,19,00,318,,0*47</div>
<div class="t" style="left:8px;top:586px;font-family:'Liberation Mono',monospace;font-size:20px;color:#111">09:24:36  $GBGSV,4,1,15,01,47,123,40,06,</div>
<div class="t" style="left:8px;top:605px;font-family:'Liberation Mono',monospace;font-size:20px;color:#111">09:24:36  $GBGSV,4,2,15,07,62,193,42,08,</div>
<div class="t" style="left:8px;top:625px;font-family:'Liberation Mono',monospace;font-size:20px;color:#111">09:24:36  $GBGSV,4,3,15,13,15,211,35,14,</div>
<div class="t" style="left:8px;top:644px;font-family:'Liberation Mono',monospace;font-size:20px;color:#111">09:24:36  $GBGSV,4,4,15,24,54,297,46,26,</div>
<div class="t" style="left:8px;top:664px;font-family:'Liberation Mono',monospace;font-size:20px;color:#111">09:24:36  $GBGSV,1,1,03,02,47,237,,05,</div>
<div class="t" style="left:8px;top:683px;font-family:'Liberation Mono',monospace;font-size:20px;color:#111">09:24:36  $GNGLL,2232.45034,N,11405.51</div>
</div>
<div class="a" style="left:480px;top:205px;width:24px;height:732px;background:#f0f0f0"></div>
<svg class="a" style="left:482px;top:210px" width="20" height="16"><path d="M5 10.5L10 5.5L15 10.5" fill="none" stroke="#606060" stroke-width="3"/></svg>
<div class="a" style="left:481px;top:887px;width:22px;height:25px;background:#cdcdcd"></div>
<svg class="a" style="left:482px;top:917px" width="20" height="16"><path d="M5 5.5L10 10.5L15 5.5" fill="none" stroke="#606060" stroke-width="3"/></svg>
<div class="a" style="left:15px;top:938px;width:489px;height:25px;background:#f0f0f0"></div>
<div class="a" style="left:253px;top:944px;width:250px;height:19px;background:#f0f0f0;border-top:2px solid #6d6d6d;border-left:2px solid #6d6d6d"></div>
<div class="a" style="left:53px;top:945px;width:1px;height:18px;background:#a0a0a0"></div>
<div class="a" style="left:200px;top:945px;width:1px;height:18px;background:#a0a0a0"></div>
<div class="a" style="left:243px;top:945px;width:1px;height:18px;background:#a0a0a0"></div>
<div class="a" style="left:15px;top:938px;width:489px;height:25px;overflow:hidden">
<svg class="a" style="left:5px;top:6px" width="24" height="22"><path d="M7 9V6A4.5 4.5 0 0 1 16 6V8" fill="none" stroke="#000" stroke-width="4"/><path d="M7 9V6A4.5 4.5 0 0 1 16 6V8" fill="none" stroke="#e8e800" stroke-width="2"/><rect x="2" y="10" width="18" height="11" rx="2" fill="#ffff00" stroke="#000" stroke-width="1.8"/><path d="M9 13H13L11 16Z" fill="#000"/></svg>
<svg class="a" style="left:48px;top:8px" width="24" height="20"><path d="M3 2L19 18M19 2L4 18" stroke="#ff0000" stroke-width="3"/></svg>
<svg class="a" style="left:81px;top:6px" width="28" height="22"><circle cx="9" cy="9.5" r="7" fill="#fff" stroke="#000" stroke-width="1.8"/><path d="M9 4.5V10L12 12" stroke="#000" stroke-width="1.5" fill="none"/><path d="M14 19H19M21 19H26" stroke="#000" stroke-width="1.6"/></svg>
<svg class="a" style="left:116px;top:6px" width="24" height="22"><path d="M11 20C5 14 1 11 1 6.5A5 5 0 0 1 11 4.5A5 5 0 0 1 21 6.5C21 11 17 14 11 20Z" fill="#ff0000" stroke="#700000" stroke-width="1"/><path d="M20 14V20" stroke="#ff0000" stroke-width="1.5"/></svg>
<svg class="a" style="left:151px;top:6px" width="26" height="22"><rect x="1" y="1" width="21" height="19" fill="#fff" stroke="#000" stroke-width="1.6"/><rect x="1" y="1" width="21" height="3" fill="#000080"/><path d="M3 7H9M3 10H8M3 13H7M3 16H7" stroke="#000" stroke-width="1.3"/><path d="M10 20V13H13V10H16V14H19V12H24V20Z" fill="#000"/></svg>
<svg class="a" style="left:198px;top:9px" width="18" height="18"><rect x="1.5" y="1.5" width="4" height="16" fill="none" stroke="#b0b0b0" stroke-width="1.4"/><rect x="10.5" y="1.5" width="4" height="16" fill="none" stroke="#b0b0b0" stroke-width="1.4"/></svg>
</div>
<div class="a" style="left:519px;top:157px;width:540px;height:385px;background:linear-gradient(#c2d1e3,#d3e0ef 40px,#dbe6f3);border:1px solid #6e7a88;border-radius:6px 6px 0 0"></div>
<div class="a" style="left:520px;top:158px;width:538px;height:384px;border:1px solid rgba(255,255,255,.55);border-bottom:none;border-radius:5px 5px 0 0"></div>
<svg class="a" style="left:532px;top:173px" width="22" height="24"><path d="M1 1H21V15L14 23H1Z" fill="#000"/><path d="M7 7h5.5a3.2 3.2 0 0 1 0 6.4H9.4V17H7Z M9.4 9.1V11.3h2.6a1.1 1.1 0 0 0 0-2.2Z" fill="#e0e0e0" fill-rule="evenodd"/></svg>
<div class="t" style="left:563px;top:176px;font-size:19.5px;color:#97a3b2">Deviation Map</div>
<div class="a" style="left:896px;top:172px;width:47px;height:26px;border:1px solid #8a9bb2;border-radius:4px;background:linear-gradient(#d4e0ee,#c3d3e6 50%,#bccde3 51%,#c9d9ec)"></div>
<div class="a" style="left:911px;top:186px;width:16px;height:6px;background:#f4f6f8;border:1px solid #3c4a5c;border-radius:2px"></div>
<div class="a" style="left:947px;top:172px;width:47px;height:26px;border:1px solid #8a9bb2;border-radius:4px;background:linear-gradient(#d4e0ee,#c3d3e6 50%,#bccde3 51%,#c9d9ec)"></div>
<div class="a" style="left:962px;top:178px;width:16px;height:14px;background:#f4f6f8;border:1px solid #3c4a5c;border-radius:2px"></div>
<div class="a" style="left:966px;top:182px;width:8px;height:5px;background:#c9d6e6;border:1px solid #3c4a5c"></div>
<div class="a" style="left:998px;top:172px;width:47px;height:26px;border:1px solid #8a9bb2;border-radius:4px;background:linear-gradient(#d4e0ee,#c3d3e6 50%,#bccde3 51%,#c9d9ec)"></div>
<svg class="a" style="left:1011px;top:176px" width="20" height="18"><path d="M5.5 4.5L14.5 13.5M14.5 4.5L5.5 13.5" stroke="#3c4a5c" stroke-width="6.5" stroke-linecap="round"/><path d="M5.5 4.5L14.5 13.5M14.5 4.5L5.5 13.5" stroke="#f6f8fa" stroke-width="3.4" stroke-linecap="round"/></svg>
<div class="a" style="left:531px;top:204px;width:504px;height:331px;background:#000;border-top:3px solid #7a7a7a;border-left:3px solid #7a7a7a"></div>
<svg class="a" style="left:0;top:0;clip-path:inset(207px 885px 486px 534px)" width="1920" height="1023"><circle cx="790" cy="372" r="36" fill="none" stroke="#d8d8d8" stroke-width="1.2" stroke-dasharray="3.5 5"/><circle cx="790" cy="372" r="72" fill="none" stroke="#d8d8d8" stroke-width="1.2" stroke-dasharray="3.5 5"/><circle cx="790" cy="372" r="108" fill="none" stroke="#d8d8d8" stroke-width="1.2" stroke-dasharray="3.5 5"/><circle cx="790" cy="372" r="144" fill="none" stroke="#d8d8d8" stroke-width="1.2" stroke-dasharray="3.5 5"/><path d="M646 372H934M790 228V516" stroke="#d8d8d8" stroke-width="1.2" stroke-dasharray="4.5 3"/><text x="788" y="226" font-size="17" text-anchor="middle" font-family="Liberation Sans" fill="#d8d8d8">N</text><text x="788" y="531" font-size="17" text-anchor="middle" font-family="Liberation Sans" fill="#d8d8d8">S</text><text x="635" y="378" font-size="17" text-anchor="middle" font-family="Liberation Sans" fill="#d8d8d8">W</text><text x="945" y="378" font-size="17" text-anchor="middle" font-family="Liberation Sans" fill="#d8d8d8">E</text><text x="852" y="392" font-size="16" font-family="Liberation Sans" fill="#d8d8d8">1m</text><text x="922" y="392" font-size="16" font-family="Liberation Sans" fill="#d8d8d8">2m</text><text x="818" y="527" font-size="17" font-family="Liberation Sans" fill="#d8d8d8" textLength="230" lengthAdjust="spacingAndGlyphs">22.54083147? 114.09186263?</text><g transform="translate(690,280) scale(0.18573)" fill="none" stroke="#00ff00" stroke-width="21" stroke-linejoin="round" stroke-linecap="round"><polyline points="95,170 130,140 175,115 215,130 260,150 320,165 360,195 390,235 420,280 445,315 490,330 540,335 570,350 600,345 630,300 665,285 700,295 690,320 650,340 640,370 680,390 710,420 700,470 730,500 790,520 800,560 790,610 770,640 720,660 665,690 660,740 690,790 730,820 780,800 840,760 890,720 910,670 880,640 840,635 780,655 730,660 690,640 650,625 600,600 600,550 640,540 660,500 655,440 630,400 590,370 560,350"/><polyline points="95,170 150,190 215,190 250,230 270,280 270,330 280,400 300,470 330,540 360,590 420,640 450,680 480,720 440,780 405,825"/><polyline points="480,720 470,830 470,940 500,910 520,830 540,730 540,620 540,530 545,430 545,330 545,190"/><polyline points="540,340 500,380 455,420 440,470 420,540 430,600 470,660 490,700 510,720"/><polyline points="480,500 540,520 570,510 600,560 640,600"/></g></svg>
<div class="a" style="left:519px;top:537px;width:516px;height:440px;background:linear-gradient(#98b2d2,#acc6e2 42px,#bcd3ec);border:1px solid #5a5f66;border-radius:6px 6px 0 0"></div>
<div class="a" style="left:520px;top:538px;width:514px;height:439px;border:1px solid rgba(255,255,255,.55);border-bottom:none;border-radius:5px 5px 0 0"></div>
<svg class="a" style="left:532px;top:553px" width="22" height="24"><path d="M1 1H21V15L14 23H1Z" fill="#000"/><path d="M7 7h5.5a3.2 3.2 0 0 1 0 6.4H9.4V17H7Z M9.4 9.1V11.3h2.6a1.1 1.1 0 0 0 0-2.2Z" fill="#e0e0e0" fill-rule="evenodd"/></svg>
<div class="t" style="left:563px;top:556px;font-size:19.5px;color:#1e3450">Sky View</div>
<div class="a" style="left:871px;top:552px;width:47px;height:26px;border:1px solid #8a9bb2;border-radius:4px;background:linear-gradient(#d4e0ee,#c3d3e6 50%,#bccde3 51%,#c9d9ec)"></div>
<div class="a" style="left:886px;top:566px;width:16px;height:6px;background:#f4f6f8;border:1px solid #3c4a5c;border-radius:2px"></div>
<div class="a" style="left:922px;top:552px;width:47px;height:26px;border:1px solid #8a9bb2;border-radius:4px;background:linear-gradient(#d4e0ee,#c3d3e6 50%,#bccde3 51%,#c9d9ec)"></div>
<div class="a" style="left:937px;top:558px;width:16px;height:14px;background:#f4f6f8;border:1px solid #3c4a5c;border-radius:2px"></div>
<div class="a" style="left:941px;top:562px;width:8px;height:5px;background:#c9d6e6;border:1px solid #3c4a5c"></div>
<div class="a" style="left:973px;top:552px;width:47px;height:26px;border:1px solid #6b2a22;border-radius:4px;background:linear-gradient(#e8a596,#d0604a 45%,#b83a22 55%,#c7533a)"></div>
<svg class="a" style="left:986px;top:556px" width="20" height="18"><path d="M5.5 4.5L14.5 13.5M14.5 4.5L5.5 13.5" stroke="#3c4a5c" stroke-width="6.5" stroke-linecap="round"/><path d="M5.5 4.5L14.5 13.5M14.5 4.5L5.5 13.5" stroke="#f6f8fa" stroke-width="3.4" stroke-linecap="round"/></svg>
<div class="a" style="left:530px;top:584px;width:490px;height:379px;background:#000;border-top:2px solid #6a6a6a;border-left:2px solid #6a6a6a"></div>
<svg class="a" style="left:0;top:0;clip-path:inset(586px 900px 61px 532px)" width="1920" height="1023"><path d="M654.2 656.5A173.0 173.0 0 0 1 690.0 629.0L699.6 645.6A153.8 153.8 0 0 0 667.8 670.1Z" fill="#ff0000"/><path d="M667.8 670.1A153.8 153.8 0 0 1 699.6 645.6L709.2 662.3A134.6 134.6 0 0 0 681.4 683.7Z" fill="#30b8f8"/><path d="M681.4 683.7A134.6 134.6 0 0 1 709.2 662.3L718.8 678.9A115.3 115.3 0 0 0 694.9 697.2Z" fill="#00f4f4"/><path d="M694.9 697.2A115.3 115.3 0 0 1 718.8 678.9L728.4 695.6A96.1 96.1 0 0 0 708.5 710.8Z" fill="#00f4f4"/><path d="M643.3 701.9A153.8 153.8 0 0 1 667.8 670.1L681.4 683.7A134.6 134.6 0 0 0 660.0 711.5Z" fill="#30b8f8"/><path d="M646.5 744.0A134.6 134.6 0 0 1 660.0 711.5L676.6 721.1A115.3 115.3 0 0 0 665.1 748.9Z" fill="#30b8f8"/><path d="M728.4 695.6A96.1 96.1 0 0 1 751.6 686.0L756.6 704.5A76.9 76.9 0 0 0 738.1 712.2Z" fill="#00f4f4"/><path d="M738.1 712.2A76.9 76.9 0 0 1 756.6 704.5L761.6 723.1A57.7 57.7 0 0 0 747.7 728.9Z" fill="#00f4f4"/><path d="M751.6 686.0A96.1 96.1 0 0 1 776.5 682.7L776.5 701.9A76.9 76.9 0 0 0 756.6 704.5Z" fill="#30f4a8"/><path d="M709.9 740.4A76.9 76.9 0 0 1 722.1 724.4L735.7 738.0A57.7 57.7 0 0 0 726.6 750.0Z" fill="#30f4a8"/><path d="M726.6 750.0A57.7 57.7 0 0 1 735.7 738.0L749.3 751.6A38.4 38.4 0 0 0 743.2 759.6Z" fill="#30f4a8"/><path d="M603.5 778.8A173.0 173.0 0 0 1 609.4 734.0L628.0 739.0A153.8 153.8 0 0 0 622.7 778.8Z" fill="#30f4a8"/><path d="M776.5 625.0A153.8 153.8 0 0 1 816.3 630.3L811.3 648.8A134.6 134.6 0 0 0 776.5 644.2Z" fill="#ff0000"/><path d="M776.5 644.2A134.6 134.6 0 0 1 811.3 648.8L806.4 667.4A115.3 115.3 0 0 0 776.5 663.5Z" fill="#ff0000"/><path d="M776.5 663.5A115.3 115.3 0 0 1 806.4 667.4L801.4 686.0A96.1 96.1 0 0 0 776.5 682.7Z" fill="#ff0000"/><path d="M776.5 682.7A96.1 96.1 0 0 1 801.4 686.0L796.4 704.5A76.9 76.9 0 0 0 776.5 701.9Z" fill="#ff0000"/><path d="M776.5 701.9A76.9 76.9 0 0 1 796.4 704.5L791.4 723.1A57.7 57.7 0 0 0 776.5 721.1Z" fill="#5a10ff"/><path d="M776.5 721.1A57.7 57.7 0 0 1 791.4 723.1L786.5 741.7A38.4 38.4 0 0 0 776.5 740.4Z" fill="#5a10ff"/><path d="M801.4 686.0A96.1 96.1 0 0 1 824.6 695.6L814.9 712.2A76.9 76.9 0 0 0 796.4 704.5Z" fill="#00f4f4"/><path d="M796.4 704.5A76.9 76.9 0 0 1 814.9 712.2L805.3 728.9A57.7 57.7 0 0 0 791.4 723.1Z" fill="#00f4f4"/><path d="M863.0 629.0A173.0 173.0 0 0 1 898.8 656.5L885.2 670.1A153.8 153.8 0 0 0 853.4 645.6Z" fill="#ff0000"/><path d="M853.4 645.6A153.8 153.8 0 0 1 885.2 670.1L871.6 683.7A134.6 134.6 0 0 0 843.8 662.3Z" fill="#30b8f8"/><path d="M926.3 692.3A173.0 173.0 0 0 1 943.6 734.0L925.0 739.0A153.8 153.8 0 0 0 909.7 701.9Z" fill="#ff0000"/><path d="M943.6 734.0A173.0 173.0 0 0 1 949.5 778.8L930.3 778.8A153.8 153.8 0 0 0 925.0 739.0Z" fill="#00f4f4"/><path d="M906.5 744.0A134.6 134.6 0 0 1 911.1 778.8L891.8 778.8A115.3 115.3 0 0 0 887.9 748.9Z" fill="#00f4f4"/><path d="M809.8 759.6A38.4 38.4 0 0 1 813.6 768.8L795.1 773.8A19.2 19.2 0 0 0 793.1 769.2Z" fill="#30f4a8"/><path d="M832.2 763.9A57.7 57.7 0 0 1 834.2 778.8L814.9 778.8A38.4 38.4 0 0 0 813.6 768.8Z" fill="#30f4a8"/><path d="M834.2 778.8A57.7 57.7 0 0 1 832.2 793.7L813.6 788.8A38.4 38.4 0 0 0 814.9 778.8Z" fill="#30f4a8"/><path d="M853.4 778.8A76.9 76.9 0 0 1 850.8 798.7L832.2 793.7A57.7 57.7 0 0 0 834.2 778.8Z" fill="#30f4a8"/><path d="M646.5 813.6A134.6 134.6 0 0 1 641.9 778.8L661.2 778.8A115.3 115.3 0 0 0 665.1 808.7Z" fill="#ff0000"/><path d="M643.3 855.7A153.8 153.8 0 0 1 628.0 818.6L646.5 813.6A134.6 134.6 0 0 0 660.0 846.1Z" fill="#ff0000"/><path d="M681.4 873.9A134.6 134.6 0 0 1 660.0 846.1L676.6 836.5A115.3 115.3 0 0 0 694.9 860.4Z" fill="#30b8f8"/><path d="M718.8 878.7A115.3 115.3 0 0 1 694.9 860.4L708.5 846.8A96.1 96.1 0 0 0 728.4 862.0Z" fill="#00f4f4"/><path d="M709.2 895.3A134.6 134.6 0 0 1 681.4 873.9L694.9 860.4A115.3 115.3 0 0 0 718.8 878.7Z" fill="#00f4f4"/><path d="M699.6 912.0A153.8 153.8 0 0 1 667.8 887.5L681.4 873.9A134.6 134.6 0 0 0 709.2 895.3Z" fill="#1c8cff"/><path d="M736.7 927.3A153.8 153.8 0 0 1 699.6 912.0L709.2 895.3A134.6 134.6 0 0 0 741.7 908.8Z" fill="#1c8cff"/><path d="M751.6 871.6A96.1 96.1 0 0 1 728.4 862.0L738.1 845.4A76.9 76.9 0 0 0 756.6 853.1Z" fill="#00f4f4"/><path d="M735.7 819.6A57.7 57.7 0 0 1 726.6 807.6L743.2 798.0A38.4 38.4 0 0 0 749.3 806.0Z" fill="#30f4a8"/><path d="M708.5 846.8A96.1 96.1 0 0 1 693.3 826.9L709.9 817.2A76.9 76.9 0 0 0 722.1 833.2Z" fill="#ff0000"/><path d="M776.5 836.5A57.7 57.7 0 0 1 761.6 834.5L766.5 815.9A38.4 38.4 0 0 0 776.5 817.2Z" fill="#00f4f4"/><path d="M893.0 846.1A134.6 134.6 0 0 1 871.6 873.9L858.1 860.4A115.3 115.3 0 0 0 876.4 836.5Z" fill="#00f4f4"/><path d="M834.2 878.7A115.3 115.3 0 0 1 806.4 890.2L801.4 871.6A96.1 96.1 0 0 0 824.6 862.0Z" fill="#30f4a8"/><path d="M816.3 927.3A153.8 153.8 0 0 1 776.5 932.6L776.5 913.4A134.6 134.6 0 0 0 811.3 908.8Z" fill="#00f4f4"/><path d="M811.3 908.8A134.6 134.6 0 0 1 776.5 913.4L776.5 894.1A115.3 115.3 0 0 0 806.4 890.2Z" fill="#00f4f4"/><text x="677" y="655.1" font-size="18" fill="#000018" text-anchor="middle" font-family="Liberation Sans" textLength="9" lengthAdjust="spacingAndGlyphs">0</text><text x="689.7" y="669.8" font-size="18" fill="#000018" text-anchor="middle" font-family="Liberation Sans" textLength="18" lengthAdjust="spacingAndGlyphs">37</text><text x="701.4" y="686.5" font-size="18" fill="#000018" text-anchor="middle" font-family="Liberation Sans" textLength="18" lengthAdjust="spacingAndGlyphs">40</text><text x="662.3" y="698.2" font-size="18" fill="#000018" text-anchor="middle" font-family="Liberation Sans" textLength="18" lengthAdjust="spacingAndGlyphs">37</text><text x="717" y="703.0" font-size="18" fill="#000018" text-anchor="middle" font-family="Liberation Sans" textLength="9" lengthAdjust="spacingAndGlyphs">1</text><text x="741.5" y="703.0" font-size="18" fill="#000018" text-anchor="middle" font-family="Liberation Sans" textLength="18" lengthAdjust="spacingAndGlyphs">40</text><text x="766" y="697.2" font-size="18" fill="#000018" text-anchor="middle" font-family="Liberation Sans" textLength="18" lengthAdjust="spacingAndGlyphs">44</text><text x="750" y="725.5" font-size="18" fill="#000018" text-anchor="middle" font-family="Liberation Sans" textLength="18" lengthAdjust="spacingAndGlyphs">48</text><text x="614.4" y="762.7" font-size="18" fill="#000018" text-anchor="middle" font-family="Liberation Sans" textLength="18" lengthAdjust="spacingAndGlyphs">46</text><text x="722" y="741.2" font-size="18" fill="#000018" text-anchor="middle" font-family="Liberation Sans" textLength="9" lengthAdjust="spacingAndGlyphs">4</text><text x="734.7" y="752.9" font-size="18" fill="#000018" text-anchor="middle" font-family="Liberation Sans" textLength="9" lengthAdjust="spacingAndGlyphs">4</text><text x="875.6" y="655.2" font-size="18" fill="#000018" text-anchor="middle" font-family="Liberation Sans" textLength="9" lengthAdjust="spacingAndGlyphs">0</text><text x="925.4" y="722.5" font-size="18" fill="#000018" text-anchor="middle" font-family="Liberation Sans" textLength="9" lengthAdjust="spacingAndGlyphs">0</text><text x="899" y="768.5" font-size="18" fill="#000018" text-anchor="middle" font-family="Liberation Sans" textLength="18" lengthAdjust="spacingAndGlyphs">40</text><text x="937" y="762.5" font-size="18" fill="#000018" text-anchor="middle" font-family="Liberation Sans" textLength="18" lengthAdjust="spacingAndGlyphs">41</text><text x="801" y="718.5" font-size="18" fill="#000018" text-anchor="middle" font-family="Liberation Sans" textLength="18" lengthAdjust="spacingAndGlyphs">42</text><text x="652.6" y="800.0" font-size="18" fill="#000018" text-anchor="middle" font-family="Liberation Sans" textLength="9" lengthAdjust="spacingAndGlyphs">0</text><text x="643.8" y="838.1" font-size="18" fill="#000018" text-anchor="middle" font-family="Liberation Sans" textLength="9" lengthAdjust="spacingAndGlyphs">0</text><text x="715" y="864.5" font-size="18" fill="#000018" text-anchor="middle" font-family="Liberation Sans" textLength="18" lengthAdjust="spacingAndGlyphs">42</text><text x="689.7" y="895.8" font-size="18" fill="#000018" text-anchor="middle" font-family="Liberation Sans" textLength="18" lengthAdjust="spacingAndGlyphs">35</text><text x="725" y="914.3" font-size="18" fill="#000018" text-anchor="middle" font-family="Liberation Sans" textLength="18" lengthAdjust="spacingAndGlyphs">31</text><text x="738.6" y="814.5" font-size="18" fill="#000018" text-anchor="middle" font-family="Liberation Sans" textLength="18" lengthAdjust="spacingAndGlyphs">40</text><text x="746.4" y="866.5" font-size="18" fill="#000018" text-anchor="middle" font-family="Liberation Sans" textLength="18" lengthAdjust="spacingAndGlyphs">55</text><text x="790.5" y="907.5" font-size="18" fill="#000018" text-anchor="middle" font-family="Liberation Sans" textLength="18" lengthAdjust="spacingAndGlyphs">41</text><text x="828.6" y="777.5" font-size="18" fill="#000018" text-anchor="middle" font-family="Liberation Sans" textLength="9" lengthAdjust="spacingAndGlyphs">9</text><text x="818" y="792.1" font-size="18" fill="#000018" text-anchor="middle" font-family="Liberation Sans" textLength="9" lengthAdjust="spacingAndGlyphs">4</text><circle cx="776.5" cy="778.8" r="173.0" fill="none" stroke="#d0d0d0" stroke-width="1.15"/><circle cx="776.5" cy="778.8" r="153.8" fill="none" stroke="#d0d0d0" stroke-width="1.15"/><circle cx="776.5" cy="778.8" r="134.6" fill="none" stroke="#d0d0d0" stroke-width="1.15"/><circle cx="776.5" cy="778.8" r="115.3" fill="none" stroke="#d0d0d0" stroke-width="1.15"/><circle cx="776.5" cy="778.8" r="96.1" fill="none" stroke="#d0d0d0" stroke-width="1.15"/><circle cx="776.5" cy="778.8" r="76.9" fill="none" stroke="#d0d0d0" stroke-width="1.15"/><circle cx="776.5" cy="778.8" r="57.7" fill="none" stroke="#d0d0d0" stroke-width="1.15"/><circle cx="776.5" cy="778.8" r="38.4" fill="none" stroke="#d0d0d0" stroke-width="1.15"/><circle cx="776.5" cy="778.8" r="19.2" fill="none" stroke="#d0d0d0" stroke-width="1.15"/><path d="M776.5 778.8L776.5 605.8" stroke="#d0d0d0" stroke-width="1.15"/><path d="M776.5 778.8L821.3 611.7" stroke="#d0d0d0" stroke-width="1.15"/><path d="M776.5 778.8L863.0 629.0" stroke="#d0d0d0" stroke-width="1.15"/><path d="M776.5 778.8L898.8 656.5" stroke="#d0d0d0" stroke-width="1.15"/><path d="M776.5 778.8L926.3 692.3" stroke="#d0d0d0" stroke-width="1.15"/><path d="M776.5 778.8L943.6 734.0" stroke="#d0d0d0" stroke-width="1.15"/><path d="M776.5 778.8L949.5 778.8" stroke="#d0d0d0" stroke-width="1.15"/><path d="M776.5 778.8L943.6 823.6" stroke="#d0d0d0" stroke-width="1.15"/><path d="M776.5 778.8L926.3 865.3" stroke="#d0d0d0" stroke-width="1.15"/><path d="M776.5 778.8L898.8 901.1" stroke="#d0d0d0" stroke-width="1.15"/><path d="M776.5 778.8L863.0 928.6" stroke="#d0d0d0" stroke-width="1.15"/><path d="M776.5 778.8L821.3 945.9" stroke="#d0d0d0" stroke-width="1.15"/><path d="M776.5 778.8L776.5 951.8" stroke="#d0d0d0" stroke-width="1.15"/><path d="M776.5 778.8L731.7 945.9" stroke="#d0d0d0" stroke-width="1.15"/><path d="M776.5 778.8L690.0 928.6" stroke="#d0d0d0" stroke-width="1.15"/><path d="M776.5 778.8L654.2 901.1" stroke="#d0d0d0" stroke-width="1.15"/><path d="M776.5 778.8L626.7 865.3" stroke="#d0d0d0" stroke-width="1.15"/><path d="M776.5 778.8L609.4 823.6" stroke="#d0d0d0" stroke-width="1.15"/><path d="M776.5 778.8L603.5 778.8" stroke="#d0d0d0" stroke-width="1.15"/><path d="M776.5 778.8L609.4 734.0" stroke="#d0d0d0" stroke-width="1.15"/><path d="M776.5 778.8L626.7 692.3" stroke="#d0d0d0" stroke-width="1.15"/><path d="M776.5 778.8L654.2 656.5" stroke="#d0d0d0" stroke-width="1.15"/><path d="M776.5 778.8L690.0 629.0" stroke="#d0d0d0" stroke-width="1.15"/><path d="M776.5 778.8L731.7 611.7" stroke="#d0d0d0" stroke-width="1.15"/><path d="M776.5 778.8L778.8 752.0" stroke="#b8b8b8" stroke-width="0.8"/><path d="M776.5 778.8L781.2 752.3" stroke="#b8b8b8" stroke-width="0.8"/><path d="M776.5 778.8L785.7 753.5" stroke="#b8b8b8" stroke-width="0.8"/><path d="M776.5 778.8L787.9 754.4" stroke="#b8b8b8" stroke-width="0.8"/><path d="M776.5 778.8L791.9 756.8" stroke="#b8b8b8" stroke-width="0.8"/><path d="M776.5 778.8L793.8 758.2" stroke="#b8b8b8" stroke-width="0.8"/><path d="M776.5 778.8L797.1 761.5" stroke="#b8b8b8" stroke-width="0.8"/><path d="M776.5 778.8L798.5 763.4" stroke="#b8b8b8" stroke-width="0.8"/><path d="M776.5 778.8L800.9 767.4" stroke="#b8b8b8" stroke-width="0.8"/><path d="M776.5 778.8L801.8 769.6" stroke="#b8b8b8" stroke-width="0.8"/><path d="M776.5 778.8L803.0 774.1" stroke="#b8b8b8" stroke-width="0.8"/><path d="M776.5 778.8L803.3 776.5" stroke="#b8b8b8" stroke-width="0.8"/><path d="M776.5 778.8L803.3 781.1" stroke="#b8b8b8" stroke-width="0.8"/><path d="M776.5 778.8L803.0 783.5" stroke="#b8b8b8" stroke-width="0.8"/><path d="M776.5 778.8L801.8 788.0" stroke="#b8b8b8" stroke-width="0.8"/><path d="M776.5 778.8L800.9 790.2" stroke="#b8b8b8" stroke-width="0.8"/><path d="M776.5 778.8L798.5 794.2" stroke="#b8b8b8" stroke-width="0.8"/><path d="M776.5 778.8L797.1 796.1" stroke="#b8b8b8" stroke-width="0.8"/><path d="M776.5 778.8L793.8 799.4" stroke="#b8b8b8" stroke-width="0.8"/><path d="M776.5 778.8L791.9 800.8" stroke="#b8b8b8" stroke-width="0.8"/><path d="M776.5 778.8L787.9 803.2" stroke="#b8b8b8" stroke-width="0.8"/><path d="M776.5 778.8L785.7 804.1" stroke="#b8b8b8" stroke-width="0.8"/><path d="M776.5 778.8L781.2 805.3" stroke="#b8b8b8" stroke-width="0.8"/><path d="M776.5 778.8L778.8 805.6" stroke="#b8b8b8" stroke-width="0.8"/><path d="M776.5 778.8L774.2 805.6" stroke="#b8b8b8" stroke-width="0.8"/><path d="M776.5 778.8L771.8 805.3" stroke="#b8b8b8" stroke-width="0.8"/><path d="M776.5 778.8L767.3 804.1" stroke="#b8b8b8" stroke-width="0.8"/><path d="M776.5 778.8L765.1 803.2" stroke="#b8b8b8" stroke-width="0.8"/><path d="M776.5 778.8L761.1 800.8" stroke="#b8b8b8" stroke-width="0.8"/><path d="M776.5 778.8L759.2 799.4" stroke="#b8b8b8" stroke-width="0.8"/><path d="M776.5 778.8L755.9 796.1" stroke="#b8b8b8" stroke-width="0.8"/><path d="M776.5 778.8L754.5 794.2" stroke="#b8b8b8" stroke-width="0.8"/><path d="M776.5 778.8L752.1 790.2" stroke="#b8b8b8" stroke-width="0.8"/><path d="M776.5 778.8L751.2 788.0" stroke="#b8b8b8" stroke-width="0.8"/><path d="M776.5 778.8L750.0 783.5" stroke="#b8b8b8" stroke-width="0.8"/><path d="M776.5 778.8L749.7 781.1" stroke="#b8b8b8" stroke-width="0.8"/><path d="M776.5 778.8L749.7 776.5" stroke="#b8b8b8" stroke-width="0.8"/><path d="M776.5 778.8L750.0 774.1" stroke="#b8b8b8" stroke-width="0.8"/><path d="M776.5 778.8L751.2 769.6" stroke="#b8b8b8" stroke-width="0.8"/><path d="M776.5 778.8L752.1 767.4" stroke="#b8b8b8" stroke-width="0.8"/><path d="M776.5 778.8L754.5 763.4" stroke="#b8b8b8" stroke-width="0.8"/><path d="M776.5 778.8L755.9 761.5" stroke="#b8b8b8" stroke-width="0.8"/><path d="M776.5 778.8L759.2 758.2" stroke="#b8b8b8" stroke-width="0.8"/><path d="M776.5 778.8L761.1 756.8" stroke="#b8b8b8" stroke-width="0.8"/><path d="M776.5 778.8L765.1 754.4" stroke="#b8b8b8" stroke-width="0.8"/><path d="M776.5 778.8L767.3 753.5" stroke="#b8b8b8" stroke-width="0.8"/><path d="M776.5 778.8L771.8 752.3" stroke="#b8b8b8" stroke-width="0.8"/><path d="M776.5 778.8L774.2 752.0" stroke="#b8b8b8" stroke-width="0.8"/><path d="M776.5 768.8L786.5 778.8L776.5 788.8L766.5 778.8Z" fill="#c4c4c4"/><text x="784" y="620.8" font-size="17" fill="#e0e0e0" font-family="Liberation Sans" textLength="24" lengthAdjust="spacingAndGlyphs">10°</text><text x="784" y="640.3" font-size="17" fill="#ffffff" font-family="Liberation Sans" textLength="24" lengthAdjust="spacingAndGlyphs">20°</text><text x="784" y="659.8" font-size="17" fill="#ffffff" font-family="Liberation Sans" textLength="24" lengthAdjust="spacingAndGlyphs">30°</text><text x="784" y="678.8" font-size="17" fill="#ffffff" font-family="Liberation Sans" textLength="24" lengthAdjust="spacingAndGlyphs">40°</text><text x="784" y="695.8" font-size="17" fill="#ffffff" font-family="Liberation Sans" textLength="24" lengthAdjust="spacingAndGlyphs">50°</text><text x="784" y="756.8" font-size="17" fill="#e0e0e0" font-family="Liberation Sans" textLength="24" lengthAdjust="spacingAndGlyphs">80°</text><text x="775" y="602" font-size="18" fill="#d8d8d8" text-anchor="middle" font-family="Liberation Sans">N</text><text x="801" y="602" font-size="18" fill="#d8d8d8" text-anchor="middle" font-family="Liberation Sans" textLength="17" lengthAdjust="spacingAndGlyphs">0°</text><text x="824" y="605" font-size="18" fill="#d8d8d8" text-anchor="middle" font-family="Liberation Sans" textLength="25" lengthAdjust="spacingAndGlyphs">15°</text><text x="720" y="606" font-size="18" fill="#d8d8d8" text-anchor="middle" font-family="Liberation Sans" textLength="33" lengthAdjust="spacingAndGlyphs">345°</text><text x="680" y="624" font-size="18" fill="#d8d8d8" text-anchor="middle" font-family="Liberation Sans" textLength="33" lengthAdjust="spacingAndGlyphs">330°</text><text x="868" y="624" font-size="18" fill="#d8d8d8" text-anchor="middle" font-family="Liberation Sans" textLength="25" lengthAdjust="spacingAndGlyphs">30°</text><text x="629" y="654" font-size="18" fill="#d8d8d8" text-anchor="middle" font-family="Liberation Sans" textLength="33" lengthAdjust="spacingAndGlyphs">315°</text><text x="913" y="654" font-size="18" fill="#d8d8d8" text-anchor="middle" font-family="Liberation Sans" textLength="25" lengthAdjust="spacingAndGlyphs">45°</text><text x="602" y="695" font-size="18" fill="#d8d8d8" text-anchor="middle" font-family="Liberation Sans" textLength="33" lengthAdjust="spacingAndGlyphs">300°</text><text x="943" y="695" font-size="18" fill="#d8d8d8" text-anchor="middle" font-family="Liberation Sans" textLength="25" lengthAdjust="spacingAndGlyphs">60°</text><text x="583" y="738" font-size="18" fill="#d8d8d8" text-anchor="middle" font-family="Liberation Sans" textLength="33" lengthAdjust="spacingAndGlyphs">285°</text><text x="962" y="738" font-size="18" fill="#d8d8d8" text-anchor="middle" font-family="Liberation Sans" textLength="25" lengthAdjust="spacingAndGlyphs">75°</text><text x="586" y="783" font-size="18" fill="#d8d8d8" text-anchor="middle" font-family="Liberation Sans">W</text><text x="958" y="783" font-size="18" fill="#d8d8d8" text-anchor="middle" font-family="Liberation Sans">E</text><text x="583" y="832" font-size="18" fill="#d8d8d8" text-anchor="middle" font-family="Liberation Sans" textLength="33" lengthAdjust="spacingAndGlyphs">255°</text><text x="964" y="832" font-size="18" fill="#d8d8d8" text-anchor="middle" font-family="Liberation Sans" textLength="33" lengthAdjust="spacingAndGlyphs">105°</text><text x="602" y="877" font-size="18" fill="#d8d8d8" text-anchor="middle" font-family="Liberation Sans" textLength="33" lengthAdjust="spacingAndGlyphs">240°</text><text x="949" y="877" font-size="18" fill="#d8d8d8" text-anchor="middle" font-family="Liberation Sans" textLength="33" lengthAdjust="spacingAndGlyphs">120°</text><text x="634" y="920" font-size="18" fill="#d8d8d8" text-anchor="middle" font-family="Liberation Sans" textLength="33" lengthAdjust="spacingAndGlyphs">225°</text><text x="920" y="920" font-size="18" fill="#d8d8d8" text-anchor="middle" font-family="Liberation Sans" textLength="33" lengthAdjust="spacingAndGlyphs">135°</text><text x="677" y="949" font-size="18" fill="#d8d8d8" text-anchor="middle" font-family="Liberation Sans" textLength="33" lengthAdjust="spacingAndGlyphs">210°</text><text x="876" y="949" font-size="18" fill="#d8d8d8" text-anchor="middle" font-family="Liberation Sans" textLength="33" lengthAdjust="spacingAndGlyphs">150°</text><text x="720" y="965" font-size="18" fill="#d8d8d8" text-anchor="middle" font-family="Liberation Sans" textLength="33" lengthAdjust="spacingAndGlyphs">195°</text><text x="775" y="969" font-size="18" fill="#d8d8d8" text-anchor="middle" font-family="Liberation Sans">S</text><text x="833" y="965" font-size="18" fill="#d8d8d8" text-anchor="middle" font-family="Liberation Sans" textLength="33" lengthAdjust="spacingAndGlyphs">165°</text><text x="975" y="965" font-size="18" fill="#d8d8d8" text-anchor="middle" font-family="Liberation Sans" textLength="91" lengthAdjust="spacingAndGlyphs">Az - / El -</text><ellipse cx="658" cy="648.5" rx="16" ry="8.5" fill="#e00000"/><text x="658" y="655.0" font-size="18" font-weight="bold" fill="#ffd8d8" text-anchor="middle" font-family="Liberation Sans" textLength="25" lengthAdjust="spacingAndGlyphs">E19</text><ellipse cx="674" cy="679" rx="15" ry="8.5" fill="#0000c8"/><text x="674" y="685.5" font-size="18" font-weight="bold" fill="#d8d8ff" text-anchor="middle" font-family="Liberation Sans" textLength="16" lengthAdjust="spacingAndGlyphs">G3</text><ellipse cx="697" cy="695" rx="15" ry="8.5" fill="#00c000"/><text x="697" y="701.5" font-size="18" font-weight="bold" fill="#d8ffb8" text-anchor="middle" font-family="Liberation Sans" textLength="16" lengthAdjust="spacingAndGlyphs">B6</text><ellipse cx="869" cy="663" rx="16" ry="8.5" fill="#00c000"/><text x="869" y="669.5" font-size="18" font-weight="bold" fill="#d8ffb8" text-anchor="middle" font-family="Liberation Sans" textLength="25" lengthAdjust="spacingAndGlyphs">G25</text><ellipse cx="772" cy="700.6" rx="16" ry="8.5" fill="#00c000"/><text x="772" y="707.1" font-size="18" font-weight="bold" fill="#d8ffb8" text-anchor="middle" font-family="Liberation Sans" textLength="25" lengthAdjust="spacingAndGlyphs">G31</text><ellipse cx="755" cy="706" rx="15" ry="8.5" fill="#00c000"/><text x="755" y="712.5" font-size="18" font-weight="bold" fill="#d8ffb8" text-anchor="middle" font-family="Liberation Sans" textLength="16" lengthAdjust="spacingAndGlyphs">B9</text><ellipse cx="804" cy="697.7" rx="16" ry="8.5" fill="#00c000"/><text x="804" y="704.2" font-size="18" font-weight="bold" fill="#d8ffb8" text-anchor="middle" font-family="Liberation Sans" textLength="25" lengthAdjust="spacingAndGlyphs">B26</text><ellipse cx="798" cy="723.7" rx="16" ry="8.5" fill="#00c000"/><text x="798" y="730.2" font-size="18" font-weight="bold" fill="#d8ffb8" text-anchor="middle" font-family="Liberation Sans" textLength="25" lengthAdjust="spacingAndGlyphs">B16</text><ellipse cx="668" cy="729.5" rx="16" ry="8.5" fill="#00c000"/><text x="668" y="736.0" font-size="18" font-weight="bold" fill="#d8ffb8" text-anchor="middle" font-family="Liberation Sans" textLength="25" lengthAdjust="spacingAndGlyphs">G22</text><ellipse cx="720" cy="746.8" rx="16" ry="8.5" fill="#00c000"/><text x="720" y="753.3" font-size="18" font-weight="bold" fill="#d8ffb8" text-anchor="middle" font-family="Liberation Sans" textLength="25" lengthAdjust="spacingAndGlyphs">B24</text><ellipse cx="905" cy="745.4" rx="16" ry="8.5" fill="#00c000"/><text x="905" y="751.9" font-size="18" font-weight="bold" fill="#d8ffb8" text-anchor="middle" font-family="Liberation Sans" textLength="25" lengthAdjust="spacingAndGlyphs">G29</text><ellipse cx="752" cy="771.5" rx="16" ry="8.5" fill="#00c000"/><text x="752" y="778.0" font-size="18" font-weight="bold" fill="#d8ffb8" text-anchor="middle" font-family="Liberation Sans" textLength="25" lengthAdjust="spacingAndGlyphs">E27</text><ellipse cx="804" cy="775" rx="15" ry="8.5" fill="#00c000"/><text x="804" y="781.5" font-size="18" font-weight="bold" fill="#d8ffb8" text-anchor="middle" font-family="Liberation Sans" textLength="16" lengthAdjust="spacingAndGlyphs">E7</text><ellipse cx="836" cy="781.7" rx="16" ry="8.5" fill="#00c000"/><text x="836" y="788.2" font-size="18" font-weight="bold" fill="#d8ffb8" text-anchor="middle" font-family="Liberation Sans" textLength="25" lengthAdjust="spacingAndGlyphs">G32</text><ellipse cx="746" cy="797.6" rx="16" ry="8.5" fill="#00c000"/><text x="746" y="804.1" font-size="18" font-weight="bold" fill="#d8ffb8" text-anchor="middle" font-family="Liberation Sans" textLength="25" lengthAdjust="spacingAndGlyphs">G26</text><ellipse cx="645" cy="807.7" rx="18" ry="8.5" fill="#e00000"/><text x="645" y="814.2" font-size="18" font-weight="bold" fill="#ffd8d8" text-anchor="middle" font-family="Liberation Sans" textLength="33" lengthAdjust="spacingAndGlyphs">S127</text><ellipse cx="626" cy="820.7" rx="16" ry="8.5" fill="#e00000"/><text x="626" y="827.2" font-size="18" font-weight="bold" fill="#ffd8d8" text-anchor="middle" font-family="Liberation Sans" textLength="25" lengthAdjust="spacingAndGlyphs">B25</text><ellipse cx="704" cy="823.6" rx="18" ry="8.5" fill="#00c000"/><text x="704" y="830.1" font-size="18" font-weight="bold" fill="#d8ffb8" text-anchor="middle" font-family="Liberation Sans" textLength="33" lengthAdjust="spacingAndGlyphs">S128</text><ellipse cx="763.6" cy="830.8" rx="15" ry="8.5" fill="#00c000"/><text x="763.6" y="837.3" font-size="18" font-weight="bold" fill="#d8ffb8" text-anchor="middle" font-family="Liberation Sans" textLength="16" lengthAdjust="spacingAndGlyphs">B7</text><ellipse cx="684" cy="854" rx="16" ry="8.5" fill="#00c000"/><text x="684" y="860.5" font-size="18" font-weight="bold" fill="#d8ffb8" text-anchor="middle" font-family="Liberation Sans" textLength="25" lengthAdjust="spacingAndGlyphs">E21</text><ellipse cx="743.4" cy="851" rx="16" ry="8.5" fill="#00c000"/><text x="743.4" y="857.5" font-size="18" font-weight="bold" fill="#d8ffb8" text-anchor="middle" font-family="Liberation Sans" textLength="25" lengthAdjust="spacingAndGlyphs">B10</text><ellipse cx="873.5" cy="854" rx="15" ry="8.5" fill="#00c000"/><text x="873.5" y="860.5" font-size="18" font-weight="bold" fill="#d8ffb8" text-anchor="middle" font-family="Liberation Sans" textLength="16" lengthAdjust="spacingAndGlyphs">E8</text><ellipse cx="708.7" cy="871.3" rx="16" ry="8.5" fill="#00c000"/><text x="708.7" y="877.8" font-size="18" font-weight="bold" fill="#d8ffb8" text-anchor="middle" font-family="Liberation Sans" textLength="25" lengthAdjust="spacingAndGlyphs">G16</text><ellipse cx="817" cy="877" rx="16" ry="8.5" fill="#00c000"/><text x="817" y="883.5" font-size="18" font-weight="bold" fill="#d8ffb8" text-anchor="middle" font-family="Liberation Sans" textLength="25" lengthAdjust="spacingAndGlyphs">B21</text><ellipse cx="701.5" cy="903" rx="16" ry="8.5" fill="#00c000"/><text x="701.5" y="909.5" font-size="18" font-weight="bold" fill="#d8ffb8" text-anchor="middle" font-family="Liberation Sans" textLength="25" lengthAdjust="spacingAndGlyphs">B13</text><ellipse cx="795.4" cy="916" rx="16" ry="8.5" fill="#00c000"/><text x="795.4" y="922.5" font-size="18" font-weight="bold" fill="#d8ffb8" text-anchor="middle" font-family="Liberation Sans" textLength="25" lengthAdjust="spacingAndGlyphs">G10</text><ellipse cx="720" cy="920.5" rx="15" ry="8.5" fill="#00c000"/><text x="720" y="927.0" font-size="18" font-weight="bold" fill="#d8ffb8" text-anchor="middle" font-family="Liberation Sans" textLength="16" lengthAdjust="spacingAndGlyphs">B8</text></svg>
<div class="a" style="left:1062px;top:157px;width:858px;height:833px;background:#f0f0f0"></div>
<div class="a" style="left:1062px;top:154px;width:2px;height:836px;background:#fff"></div>
<div class="a" style="left:1069px;top:165px;width:826px;height:3px;border-top:1px solid #a0a0a0;border-bottom:1px solid #fff;background:#f0f0f0"></div>
<div class="a" style="left:1069px;top:170px;width:826px;height:3px;border-top:1px solid #a0a0a0;border-bottom:1px solid #fff;background:#f0f0f0"></div>
<svg class="a" style="left:1898px;top:160px" width="18" height="16"><path d="M4 4L13 12M13 4L4 12" stroke="#000" stroke-width="2.6"/></svg>
<div class="a" style="left:1068px;top:180px;width:846px;height:803px;background:#000;border-top:2px solid #6a6a6a;border-left:3px solid #6a6a6a;border-right:1px solid #fff;border-bottom:1px solid #fff"></div>
<svg class="a" style="left:0;top:0;clip-path:inset(182px 8px 43px 1071px)" width="1920" height="1023"><rect x="1073.0" y="447.6" width="33.9" height="507.7" fill="#0000c8"/><path d="M1073.0 447.6H1106.9" stroke="#d0d0d0" stroke-width="1.6"/><path d="M1073.0 432.2H1106.9" stroke="#d0d0d0" stroke-width="1.6"/><path d="M1073.0 509.5H1106.9" stroke="#d0d0d0" stroke-width="1.6"/><text x="1090.0" y="460.8" font-size="12.5" fill="#8888ff" text-anchor="middle" font-family="Liberation Sans" textLength="15" lengthAdjust="spacingAndGlyphs">G3</text><text x="1090.0" y="950.8" font-size="20.5" font-weight="bold" fill="#d0d0ff" text-anchor="middle" font-family="Liberation Sans" textLength="22" lengthAdjust="spacingAndGlyphs">38</text><rect x="1106.9" y="416.7" width="33.9" height="538.6" fill="#00c000"/><path d="M1106.9 416.7H1140.9" stroke="#d0d0d0" stroke-width="1.6"/><path d="M1106.9 385.8H1140.9" stroke="#d0d0d0" stroke-width="1.6"/><path d="M1106.9 447.6H1140.9" stroke="#d0d0d0" stroke-width="1.6"/><text x="1123.9" y="429.9" font-size="12.5" fill="#003000" text-anchor="middle" font-family="Liberation Sans" textLength="22" lengthAdjust="spacingAndGlyphs">G10</text><text x="1123.9" y="950.8" font-size="20.5" font-weight="bold" fill="#000" text-anchor="middle" font-family="Liberation Sans" textLength="22" lengthAdjust="spacingAndGlyphs">40</text><rect x="1140.9" y="370.3" width="33.9" height="585.0" fill="#00c000"/><path d="M1140.9 370.3H1174.8" stroke="#d0d0d0" stroke-width="1.6"/><path d="M1140.9 478.6H1174.8" stroke="#d0d0d0" stroke-width="1.6"/><text x="1157.8" y="383.5" font-size="12.5" fill="#003000" text-anchor="middle" font-family="Liberation Sans" textLength="22" lengthAdjust="spacingAndGlyphs">G16</text><text x="1157.8" y="950.8" font-size="20.5" font-weight="bold" fill="#000" text-anchor="middle" font-family="Liberation Sans" textLength="22" lengthAdjust="spacingAndGlyphs">43</text><rect x="1174.8" y="463.1" width="33.9" height="492.2" fill="#00c000"/><path d="M1174.8 463.1H1208.8" stroke="#d0d0d0" stroke-width="1.6"/><path d="M1174.8 416.7H1208.8" stroke="#d0d0d0" stroke-width="1.6"/><path d="M1174.8 509.5H1208.8" stroke="#d0d0d0" stroke-width="1.6"/><text x="1191.8" y="476.3" font-size="12.5" fill="#003000" text-anchor="middle" font-family="Liberation Sans" textLength="22" lengthAdjust="spacingAndGlyphs">G22</text><text x="1191.8" y="950.8" font-size="20.5" font-weight="bold" fill="#000" text-anchor="middle" font-family="Liberation Sans" textLength="22" lengthAdjust="spacingAndGlyphs">37</text><rect x="1208.8" y="494.1" width="33.9" height="461.2" fill="#00c000"/><path d="M1208.8 494.1H1242.7" stroke="#d0d0d0" stroke-width="1.6"/><path d="M1208.8 447.6H1242.7" stroke="#d0d0d0" stroke-width="1.6"/><path d="M1208.8 509.5H1242.7" stroke="#d0d0d0" stroke-width="1.6"/><text x="1225.7" y="507.2" font-size="12.5" fill="#003000" text-anchor="middle" font-family="Liberation Sans" textLength="22" lengthAdjust="spacingAndGlyphs">G25</text><text x="1225.7" y="950.8" font-size="20.5" font-weight="bold" fill="#000" text-anchor="middle" font-family="Liberation Sans" textLength="22" lengthAdjust="spacingAndGlyphs">35</text><rect x="1242.7" y="308.4" width="33.9" height="646.9" fill="#00c000"/><path d="M1242.7 308.4H1276.6" stroke="#d0d0d0" stroke-width="1.6"/><path d="M1242.7 292.9H1276.6" stroke="#d0d0d0" stroke-width="1.6"/><path d="M1242.7 370.3H1276.6" stroke="#d0d0d0" stroke-width="1.6"/><text x="1259.7" y="321.6" font-size="12.5" fill="#003000" text-anchor="middle" font-family="Liberation Sans" textLength="22" lengthAdjust="spacingAndGlyphs">G26</text><text x="1259.7" y="950.8" font-size="20.5" font-weight="bold" fill="#000" text-anchor="middle" font-family="Liberation Sans" textLength="22" lengthAdjust="spacingAndGlyphs">47</text><rect x="1276.6" y="401.2" width="33.9" height="554.1" fill="#00c000"/><path d="M1276.6 401.2H1310.6" stroke="#d0d0d0" stroke-width="1.6"/><path d="M1276.6 370.3H1310.6" stroke="#d0d0d0" stroke-width="1.6"/><path d="M1276.6 463.1H1310.6" stroke="#d0d0d0" stroke-width="1.6"/><text x="1293.6" y="414.4" font-size="12.5" fill="#003000" text-anchor="middle" font-family="Liberation Sans" textLength="22" lengthAdjust="spacingAndGlyphs">G29</text><text x="1293.6" y="950.8" font-size="20.5" font-weight="bold" fill="#000" text-anchor="middle" font-family="Liberation Sans" textLength="22" lengthAdjust="spacingAndGlyphs">41</text><rect x="1310.6" y="354.8" width="33.9" height="600.5" fill="#00c000"/><path d="M1310.6 354.8H1344.5" stroke="#d0d0d0" stroke-width="1.6"/><path d="M1310.6 339.4H1344.5" stroke="#d0d0d0" stroke-width="1.6"/><path d="M1310.6 401.2H1344.5" stroke="#d0d0d0" stroke-width="1.6"/><text x="1327.5" y="368.0" font-size="12.5" fill="#003000" text-anchor="middle" font-family="Liberation Sans" textLength="22" lengthAdjust="spacingAndGlyphs">G31</text><text x="1327.5" y="950.8" font-size="20.5" font-weight="bold" fill="#000" text-anchor="middle" font-family="Liberation Sans" textLength="22" lengthAdjust="spacingAndGlyphs">44</text><rect x="1344.5" y="277.5" width="33.9" height="677.8" fill="#00c000"/><path d="M1344.5 277.5H1378.4" stroke="#d0d0d0" stroke-width="1.6"/><path d="M1344.5 262.0H1378.4" stroke="#d0d0d0" stroke-width="1.6"/><path d="M1344.5 339.4H1378.4" stroke="#d0d0d0" stroke-width="1.6"/><text x="1361.5" y="290.7" font-size="12.5" fill="#003000" text-anchor="middle" font-family="Liberation Sans" textLength="22" lengthAdjust="spacingAndGlyphs">G32</text><text x="1361.5" y="950.8" font-size="20.5" font-weight="bold" fill="#000" text-anchor="middle" font-family="Liberation Sans" textLength="22" lengthAdjust="spacingAndGlyphs">49</text><rect x="1378.4" y="308.4" width="33.9" height="646.9" fill="#00c000"/><path d="M1378.4 308.4H1412.4" stroke="#d0d0d0" stroke-width="1.6"/><path d="M1378.4 370.3H1412.4" stroke="#d0d0d0" stroke-width="1.6"/><text x="1395.4" y="321.6" font-size="12.5" fill="#003000" text-anchor="middle" font-family="Liberation Sans" textLength="15" lengthAdjust="spacingAndGlyphs">E7</text><text x="1395.4" y="950.8" font-size="20.5" font-weight="bold" fill="#000" text-anchor="middle" font-family="Liberation Sans" textLength="22" lengthAdjust="spacingAndGlyphs">47</text><rect x="1412.4" y="447.6" width="33.9" height="507.7" fill="#00c000"/><path d="M1412.4 447.6H1446.3" stroke="#d0d0d0" stroke-width="1.6"/><path d="M1412.4 401.2H1446.3" stroke="#d0d0d0" stroke-width="1.6"/><path d="M1412.4 478.6H1446.3" stroke="#d0d0d0" stroke-width="1.6"/><text x="1429.3" y="460.8" font-size="12.5" fill="#003000" text-anchor="middle" font-family="Liberation Sans" textLength="15" lengthAdjust="spacingAndGlyphs">E8</text><text x="1429.3" y="950.8" font-size="20.5" font-weight="bold" fill="#000" text-anchor="middle" font-family="Liberation Sans" textLength="22" lengthAdjust="spacingAndGlyphs">38</text><rect x="1446.3" y="447.6" width="33.9" height="507.7" fill="#00c000"/><path d="M1446.3 447.6H1480.2" stroke="#d0d0d0" stroke-width="1.6"/><path d="M1446.3 586.9H1480.2" stroke="#d0d0d0" stroke-width="1.6"/><text x="1463.3" y="460.8" font-size="12.5" fill="#003000" text-anchor="middle" font-family="Liberation Sans" textLength="22" lengthAdjust="spacingAndGlyphs">E21</text><text x="1463.3" y="950.8" font-size="20.5" font-weight="bold" fill="#000" text-anchor="middle" font-family="Liberation Sans" textLength="22" lengthAdjust="spacingAndGlyphs">38</text><rect x="1480.2" y="339.4" width="33.9" height="615.9" fill="#00c000"/><path d="M1480.2 339.4H1514.2" stroke="#d0d0d0" stroke-width="1.6"/><path d="M1480.2 308.4H1514.2" stroke="#d0d0d0" stroke-width="1.6"/><path d="M1480.2 370.3H1514.2" stroke="#d0d0d0" stroke-width="1.6"/><text x="1497.2" y="352.6" font-size="12.5" fill="#003000" text-anchor="middle" font-family="Liberation Sans" textLength="22" lengthAdjust="spacingAndGlyphs">E27</text><text x="1497.2" y="950.8" font-size="20.5" font-weight="bold" fill="#000" text-anchor="middle" font-family="Liberation Sans" textLength="22" lengthAdjust="spacingAndGlyphs">45</text><rect x="1514.2" y="385.8" width="33.9" height="569.5" fill="#00c000"/><path d="M1514.2 385.8H1548.1" stroke="#d0d0d0" stroke-width="1.6"/><path d="M1514.2 370.3H1548.1" stroke="#d0d0d0" stroke-width="1.6"/><path d="M1514.2 478.6H1548.1" stroke="#d0d0d0" stroke-width="1.6"/><text x="1531.2" y="399.0" font-size="12.5" fill="#003000" text-anchor="middle" font-family="Liberation Sans" textLength="15" lengthAdjust="spacingAndGlyphs">B6</text><text x="1531.2" y="950.8" font-size="20.5" font-weight="bold" fill="#000" text-anchor="middle" font-family="Liberation Sans" textLength="22" lengthAdjust="spacingAndGlyphs">42</text><rect x="1548.1" y="385.8" width="33.9" height="569.5" fill="#00c000"/><path d="M1548.1 385.8H1582.1" stroke="#d0d0d0" stroke-width="1.6"/><path d="M1548.1 432.2H1582.1" stroke="#d0d0d0" stroke-width="1.6"/><text x="1565.1" y="399.0" font-size="12.5" fill="#003000" text-anchor="middle" font-family="Liberation Sans" textLength="15" lengthAdjust="spacingAndGlyphs">B7</text><text x="1565.1" y="950.8" font-size="20.5" font-weight="bold" fill="#000" text-anchor="middle" font-family="Liberation Sans" textLength="22" lengthAdjust="spacingAndGlyphs">42</text><rect x="1582.1" y="540.5" width="33.9" height="414.8" fill="#00c000"/><path d="M1582.1 540.5H1616.0" stroke="#d0d0d0" stroke-width="1.6"/><path d="M1582.1 571.4H1616.0" stroke="#d0d0d0" stroke-width="1.6"/><text x="1599.0" y="553.7" font-size="12.5" fill="#003000" text-anchor="middle" font-family="Liberation Sans" textLength="15" lengthAdjust="spacingAndGlyphs">B8</text><text x="1599.0" y="950.8" font-size="20.5" font-weight="bold" fill="#000" text-anchor="middle" font-family="Liberation Sans" textLength="22" lengthAdjust="spacingAndGlyphs">32</text><rect x="1616.0" y="432.2" width="33.9" height="523.1" fill="#00c000"/><path d="M1616.0 432.2H1649.9" stroke="#d0d0d0" stroke-width="1.6"/><path d="M1616.0 416.7H1649.9" stroke="#d0d0d0" stroke-width="1.6"/><path d="M1616.0 463.1H1649.9" stroke="#d0d0d0" stroke-width="1.6"/><text x="1633.0" y="445.4" font-size="12.5" fill="#003000" text-anchor="middle" font-family="Liberation Sans" textLength="15" lengthAdjust="spacingAndGlyphs">B9</text><text x="1633.0" y="950.8" font-size="20.5" font-weight="bold" fill="#000" text-anchor="middle" font-family="Liberation Sans" textLength="22" lengthAdjust="spacingAndGlyphs">39</text><rect x="1649.9" y="432.2" width="33.9" height="523.1" fill="#00c000"/><path d="M1649.9 432.2H1683.9" stroke="#d0d0d0" stroke-width="1.6"/><path d="M1649.9 416.7H1683.9" stroke="#d0d0d0" stroke-width="1.6"/><path d="M1649.9 447.6H1683.9" stroke="#d0d0d0" stroke-width="1.6"/><text x="1666.9" y="445.4" font-size="12.5" fill="#003000" text-anchor="middle" font-family="Liberation Sans" textLength="22" lengthAdjust="spacingAndGlyphs">B10</text><text x="1666.9" y="950.8" font-size="20.5" font-weight="bold" fill="#000" text-anchor="middle" font-family="Liberation Sans" textLength="22" lengthAdjust="spacingAndGlyphs">39</text><rect x="1683.9" y="494.1" width="33.9" height="461.2" fill="#00c000"/><path d="M1683.9 494.1H1717.8" stroke="#d0d0d0" stroke-width="1.6"/><path d="M1683.9 478.6H1717.8" stroke="#d0d0d0" stroke-width="1.6"/><path d="M1683.9 525.0H1717.8" stroke="#d0d0d0" stroke-width="1.6"/><text x="1700.8" y="507.2" font-size="12.5" fill="#003000" text-anchor="middle" font-family="Liberation Sans" textLength="22" lengthAdjust="spacingAndGlyphs">B13</text><text x="1700.8" y="950.8" font-size="20.5" font-weight="bold" fill="#000" text-anchor="middle" font-family="Liberation Sans" textLength="22" lengthAdjust="spacingAndGlyphs">35</text><rect x="1717.8" y="385.8" width="33.9" height="569.5" fill="#00c000"/><path d="M1717.8 385.8H1751.8" stroke="#d0d0d0" stroke-width="1.6"/><path d="M1717.8 370.3H1751.8" stroke="#d0d0d0" stroke-width="1.6"/><path d="M1717.8 432.2H1751.8" stroke="#d0d0d0" stroke-width="1.6"/><text x="1734.8" y="399.0" font-size="12.5" fill="#003000" text-anchor="middle" font-family="Liberation Sans" textLength="22" lengthAdjust="spacingAndGlyphs">B14</text><text x="1734.8" y="950.8" font-size="20.5" font-weight="bold" fill="#000" text-anchor="middle" font-family="Liberation Sans" textLength="22" lengthAdjust="spacingAndGlyphs">42</text><rect x="1751.8" y="370.3" width="33.9" height="585.0" fill="#00c000"/><path d="M1751.8 370.3H1785.7" stroke="#d0d0d0" stroke-width="1.6"/><path d="M1751.8 401.2H1785.7" stroke="#d0d0d0" stroke-width="1.6"/><text x="1768.7" y="383.5" font-size="12.5" fill="#003000" text-anchor="middle" font-family="Liberation Sans" textLength="22" lengthAdjust="spacingAndGlyphs">B16</text><text x="1768.7" y="950.8" font-size="20.5" font-weight="bold" fill="#000" text-anchor="middle" font-family="Liberation Sans" textLength="22" lengthAdjust="spacingAndGlyphs">43</text><rect x="1785.7" y="370.3" width="33.9" height="585.0" fill="#00c000"/><path d="M1785.7 370.3H1819.6" stroke="#d0d0d0" stroke-width="1.6"/><path d="M1785.7 416.7H1819.6" stroke="#d0d0d0" stroke-width="1.6"/><text x="1802.7" y="383.5" font-size="12.5" fill="#003000" text-anchor="middle" font-family="Liberation Sans" textLength="22" lengthAdjust="spacingAndGlyphs">B21</text><text x="1802.7" y="950.8" font-size="20.5" font-weight="bold" fill="#000" text-anchor="middle" font-family="Liberation Sans" textLength="22" lengthAdjust="spacingAndGlyphs">43</text><rect x="1819.6" y="339.4" width="33.9" height="615.9" fill="#00c000"/><path d="M1819.6 339.4H1853.6" stroke="#d0d0d0" stroke-width="1.6"/><path d="M1819.6 308.4H1853.6" stroke="#d0d0d0" stroke-width="1.6"/><path d="M1819.6 354.8H1853.6" stroke="#d0d0d0" stroke-width="1.6"/><text x="1836.6" y="352.6" font-size="12.5" fill="#003000" text-anchor="middle" font-family="Liberation Sans" textLength="22" lengthAdjust="spacingAndGlyphs">B24</text><text x="1836.6" y="950.8" font-size="20.5" font-weight="bold" fill="#000" text-anchor="middle" font-family="Liberation Sans" textLength="22" lengthAdjust="spacingAndGlyphs">45</text><rect x="1853.6" y="401.2" width="33.9" height="554.1" fill="#00c000"/><path d="M1853.6 401.2H1887.5" stroke="#d0d0d0" stroke-width="1.6"/><path d="M1853.6 354.8H1887.5" stroke="#d0d0d0" stroke-width="1.6"/><path d="M1853.6 416.7H1887.5" stroke="#d0d0d0" stroke-width="1.6"/><text x="1870.5" y="414.4" font-size="12.5" fill="#003000" text-anchor="middle" font-family="Liberation Sans" textLength="22" lengthAdjust="spacingAndGlyphs">B26</text><text x="1870.5" y="950.8" font-size="20.5" font-weight="bold" fill="#000" text-anchor="middle" font-family="Liberation Sans" textLength="22" lengthAdjust="spacingAndGlyphs">41</text><path d="M1073 262.5H1888" stroke="#e0e0e0" stroke-width="1.6" stroke-dasharray="4 4"/><text x="1888" y="270.5" font-size="20" font-weight="bold" fill="#e8e8e8" font-family="Liberation Sans" textLength="22" lengthAdjust="spacingAndGlyphs">50</text><path d="M1073 417.2H1888" stroke="#e0e0e0" stroke-width="1.6" stroke-dasharray="4 4"/><text x="1888" y="425.2" font-size="20" font-weight="bold" fill="#e8e8e8" font-family="Liberation Sans" textLength="22" lengthAdjust="spacingAndGlyphs">40</text><path d="M1073 571.9H1888" stroke="#e0e0e0" stroke-width="1.6" stroke-dasharray="4 4"/><text x="1888" y="579.9" font-size="20" font-weight="bold" fill="#e8e8e8" font-family="Liberation Sans" textLength="22" lengthAdjust="spacingAndGlyphs">30</text><path d="M1073 726.6H1888" stroke="#e0e0e0" stroke-width="1.6" stroke-dasharray="4 4"/><text x="1888" y="734.6" font-size="20" font-weight="bold" fill="#e8e8e8" font-family="Liberation Sans" textLength="22" lengthAdjust="spacingAndGlyphs">20</text><path d="M1073 881.3H1888" stroke="#e0e0e0" stroke-width="1.6" stroke-dasharray="4 4"/><text x="1888" y="889.3" font-size="20" font-weight="bold" fill="#e8e8e8" font-family="Liberation Sans" textLength="22" lengthAdjust="spacingAndGlyphs">10</text><path d="M1073.0 185V955.3" stroke="#d0d0d0" stroke-width="1.6"/><path d="M1106.9 185V955.3" stroke="#d0d0d0" stroke-width="1.6"/><path d="M1140.9 185V955.3" stroke="#d0d0d0" stroke-width="1.6"/><path d="M1174.8 185V955.3" stroke="#d0d0d0" stroke-width="1.6"/><path d="M1208.8 185V955.3" stroke="#d0d0d0" stroke-width="1.6"/><path d="M1242.7 185V955.3" stroke="#d0d0d0" stroke-width="1.6"/><path d="M1276.6 185V955.3" stroke="#d0d0d0" stroke-width="1.6"/><path d="M1310.6 185V955.3" stroke="#d0d0d0" stroke-width="1.6"/><path d="M1344.5 185V955.3" stroke="#d0d0d0" stroke-width="1.6"/><path d="M1378.4 185V955.3" stroke="#d0d0d0" stroke-width="1.6"/><path d="M1412.4 185V955.3" stroke="#d0d0d0" stroke-width="1.6"/><path d="M1446.3 185V955.3" stroke="#d0d0d0" stroke-width="1.6"/><path d="M1480.2 185V955.3" stroke="#d0d0d0" stroke-width="1.6"/><path d="M1514.2 185V955.3" stroke="#d0d0d0" stroke-width="1.6"/><path d="M1548.1 185V955.3" stroke="#d0d0d0" stroke-width="1.6"/><path d="M1582.1 185V955.3" stroke="#d0d0d0" stroke-width="1.6"/><path d="M1616.0 185V955.3" stroke="#d0d0d0" stroke-width="1.6"/><path d="M1649.9 185V955.3" stroke="#d0d0d0" stroke-width="1.6"/><path d="M1683.9 185V955.3" stroke="#d0d0d0" stroke-width="1.6"/><path d="M1717.8 185V955.3" stroke="#d0d0d0" stroke-width="1.6"/><path d="M1751.8 185V955.3" stroke="#d0d0d0" stroke-width="1.6"/><path d="M1785.7 185V955.3" stroke="#d0d0d0" stroke-width="1.6"/><path d="M1819.6 185V955.3" stroke="#d0d0d0" stroke-width="1.6"/><path d="M1853.6 185V955.3" stroke="#d0d0d0" stroke-width="1.6"/><path d="M1887.5 185V955.3" stroke="#d0d0d0" stroke-width="1.6"/><path d="M1073 185H1888" stroke="#d0d0d0" stroke-width="1.6"/><rect x="1071" y="955.3" width="841" height="25" fill="#000"/><text x="1090.0" y="975.5" font-size="21.5" fill="#e8e8e8" text-anchor="middle" font-family="Liberation Sans" textLength="24.0" lengthAdjust="spacingAndGlyphs">G3</text><text x="1123.9" y="975.5" font-size="21.5" fill="#e8e8e8" text-anchor="middle" font-family="Liberation Sans" textLength="35.5" lengthAdjust="spacingAndGlyphs">G10</text><text x="1157.8" y="975.5" font-size="21.5" fill="#e8e8e8" text-anchor="middle" font-family="Liberation Sans" textLength="35.5" lengthAdjust="spacingAndGlyphs">G16</text><text x="1191.8" y="975.5" font-size="21.5" fill="#e8e8e8" text-anchor="middle" font-family="Liberation Sans" textLength="35.5" lengthAdjust="spacingAndGlyphs">G22</text><text x="1225.7" y="975.5" font-size="21.5" fill="#e8e8e8" text-anchor="middle" font-family="Liberation Sans" textLength="35.5" lengthAdjust="spacingAndGlyphs">G25</text><text x="1259.7" y="975.5" font-size="21.5" fill="#e8e8e8" text-anchor="middle" font-family="Liberation Sans" textLength="35.5" lengthAdjust="spacingAndGlyphs">G26</text><text x="1293.6" y="975.5" font-size="21.5" fill="#e8e8e8" text-anchor="middle" font-family="Liberation Sans" textLength="35.5" lengthAdjust="spacingAndGlyphs">G29</text><text x="1327.5" y="975.5" font-size="21.5" fill="#e8e8e8" text-anchor="middle" font-family="Liberation Sans" textLength="35.5" lengthAdjust="spacingAndGlyphs">G31</text><text x="1361.5" y="975.5" font-size="21.5" fill="#e8e8e8" text-anchor="middle" font-family="Liberation Sans" textLength="35.5" lengthAdjust="spacingAndGlyphs">G32</text><text x="1395.4" y="975.5" font-size="21.5" fill="#e8e8e8" text-anchor="middle" font-family="Liberation Sans" textLength="24.0" lengthAdjust="spacingAndGlyphs">E7</text><text x="1429.3" y="975.5" font-size="21.5" fill="#e8e8e8" text-anchor="middle" font-family="Liberation Sans" textLength="24.0" lengthAdjust="spacingAndGlyphs">E8</text><text x="1463.3" y="975.5" font-size="21.5" fill="#e8e8e8" text-anchor="middle" font-family="Liberation Sans" textLength="35.5" lengthAdjust="spacingAndGlyphs">E21</text><text x="1497.2" y="975.5" font-size="21.5" fill="#e8e8e8" text-anchor="middle" font-family="Liberation Sans" textLength="35.5" lengthAdjust="spacingAndGlyphs">E27</text><text x="1531.2" y="975.5" font-size="21.5" fill="#e8e8e8" text-anchor="middle" font-family="Liberation Sans" textLength="24.0" lengthAdjust="spacingAndGlyphs">B6</text><text x="1565.1" y="975.5" font-size="21.5" fill="#e8e8e8" text-anchor="middle" font-family="Liberation Sans" textLength="24.0" lengthAdjust="spacingAndGlyphs">B7</text><text x="1599.0" y="975.5" font-size="21.5" fill="#e8e8e8" text-anchor="middle" font-family="Liberation Sans" textLength="24.0" lengthAdjust="spacingAndGlyphs">B8</text><text x="1633.0" y="975.5" font-size="21.5" fill="#e8e8e8" text-anchor="middle" font-family="Liberation Sans" textLength="24.0" lengthAdjust="spacingAndGlyphs">B9</text><text x="1666.9" y="975.5" font-size="21.5" fill="#e8e8e8" text-anchor="middle" font-family="Liberation Sans" textLength="35.5" lengthAdjust="spacingAndGlyphs">B10</text><text x="1700.8" y="975.5" font-size="21.5" fill="#e8e8e8" text-anchor="middle" font-family="Liberation Sans" textLength="35.5" lengthAdjust="spacingAndGlyphs">B13</text><text x="1734.8" y="975.5" font-size="21.5" fill="#e8e8e8" text-anchor="middle" font-family="Liberation Sans" textLength="35.5" lengthAdjust="spacingAndGlyphs">B14</text><text x="1768.7" y="975.5" font-size="21.5" fill="#e8e8e8" text-anchor="middle" font-family="Liberation Sans" textLength="35.5" lengthAdjust="spacingAndGlyphs">B16</text><text x="1802.7" y="975.5" font-size="21.5" fill="#e8e8e8" text-anchor="middle" font-family="Liberation Sans" textLength="35.5" lengthAdjust="spacingAndGlyphs">B21</text><text x="1836.6" y="975.5" font-size="21.5" fill="#e8e8e8" text-anchor="middle" font-family="Liberation Sans" textLength="35.5" lengthAdjust="spacingAndGlyphs">B24</text><text x="1870.5" y="975.5" font-size="21.5" fill="#e8e8e8" text-anchor="middle" font-family="Liberation Sans" textLength="35.5" lengthAdjust="spacingAndGlyphs">B26</text><text x="1888" y="975.5" font-size="20.5" fill="#e8e8e8" font-family="Liberation Sans" textLength="23" lengthAdjust="spacingAndGlyphs">dB</text></svg>
<svg class="a" style="left:1906px;top:657px" width="14" height="87"><rect x="0.5" y="0.5" width="16" height="86" rx="3" fill="#444b58" stroke="#2a2f38"/><rect x="5" y="9.0" width="6" height="1.4" fill="#5a6270"/><rect x="5" y="12.3" width="6" height="1.4" fill="#5a6270"/><rect x="5" y="15.6" width="6" height="1.4" fill="#5a6270"/><rect x="5" y="18.9" width="6" height="1.4" fill="#5a6270"/><rect x="5" y="22.2" width="6" height="1.4" fill="#5a6270"/><rect x="5" y="25.5" width="6" height="1.4" fill="#5a6270"/><rect x="5" y="28.8" width="6" height="1.4" fill="#5a6270"/><rect x="5" y="32.1" width="6" height="1.4" fill="#5a6270"/><rect x="5" y="35.4" width="6" height="1.4" fill="#5a6270"/><rect x="5" y="38.7" width="6" height="1.4" fill="#5a6270"/><rect x="5" y="42.0" width="6" height="1.4" fill="#5a6270"/><rect x="5" y="45.3" width="6" height="1.4" fill="#5a6270"/><rect x="5" y="50.0" width="6" height="1.6" fill="#c8e070"/><rect x="5" y="53.3" width="6" height="1.6" fill="#a8d878"/><rect x="5" y="56.6" width="6" height="1.6" fill="#90d080"/><rect x="5" y="59.9" width="6" height="1.6" fill="#80c890"/><rect x="5" y="63.2" width="6" height="1.6" fill="#70c0a0"/><rect x="5" y="66.5" width="6" height="1.6" fill="#60b8b0"/><rect x="5" y="69.8" width="6" height="1.6" fill="#50b0c0"/></svg>
<div class="a" style="left:1035px;top:157px;width:26px;height:806px;background:#f0f0f0"></div>
<svg class="a" style="left:1038px;top:162px" width="20" height="16"><path d="M5 10.5L10 5.5L15 10.5" fill="none" stroke="#606060" stroke-width="3"/></svg>
<div class="a" style="left:1037px;top:183px;width:22px;height:704px;background:#cdcdcd"></div>
<svg class="a" style="left:1038px;top:942px" width="20" height="16"><path d="M5 5.5L10 10.5L15 5.5" fill="none" stroke="#606060" stroke-width="3"/></svg>
<div class="a" style="left:0px;top:963px;width:1061px;height:25px;background:#f0f0f0"></div>
<div class="a" style="left:0px;top:963px;width:3px;height:26px;background:#6b6b6b"></div>
<svg class="a" style="left:6px;top:966px" width="18" height="20"><path d="M11.5 5L6.5 10L11.5 15" fill="none" stroke="#606060" stroke-width="3"/></svg>
<div class="a" style="left:28px;top:965px;width:938px;height:21px;background:#cdcdcd"></div>
<svg class="a" style="left:1014px;top:966px" width="18" height="20"><path d="M6.5 5L11.5 10L6.5 15" fill="none" stroke="#606060" stroke-width="3"/></svg>
<div class="a" style="left:0px;top:987px;width:1062px;height:3px;background:#f0f0f0"></div>
<div class="a" style="left:0px;top:990px;width:1920px;height:2px;background:#fafafa"></div>
<div class="a" style="left:0px;top:992px;width:1920px;height:27px;background:#f0f0f0"></div>
<div class="a" style="left:0px;top:1019px;width:1920px;height:4px;background:#f2e4d2"></div>
<svg class="a" style="left:0.8px;top:992.0px;overflow:visible" width="60.8" height="27.4"><text x="2.6" y="21.6" font-size="19.6" font-family="Liberation Sans" font-weight="normal" fill="#1b1b1b" textLength="54.8" lengthAdjust="spacingAndGlyphs">Ready</text></svg>
<div class="a" style="left:423px;top:995px;width:338px;height:24px;border-top:1px solid #a0a0a0;border-left:1px solid #a0a0a0;border-right:1px solid #fff"></div>
<div class="a" style="left:777px;top:995px;width:337px;height:24px;border-top:1px solid #a0a0a0;border-left:1px solid #a0a0a0;border-right:1px solid #fff"></div>
<div class="a" style="left:1143px;top:995px;width:172px;height:24px;border-top:1px solid #a0a0a0;border-left:1px solid #a0a0a0;border-right:1px solid #fff"></div>
<div class="a" style="left:1320px;top:995px;width:157px;height:24px;border-top:1px solid #a0a0a0;border-left:1px solid #a0a0a0;border-right:1px solid #fff"></div>
<div class="a" style="left:1482px;top:995px;width:188px;height:24px;border-top:1px solid #a0a0a0;border-left:1px solid #a0a0a0;border-right:1px solid #fff"></div>
<div class="a" style="left:1674px;top:995px;width:67px;height:24px;border-top:1px solid #a0a0a0;border-left:1px solid #a0a0a0;border-right:1px solid #fff"></div>
<div class="a" style="left:1746px;top:995px;width:67px;height:24px;border-top:1px solid #a0a0a0;border-left:1px solid #a0a0a0;border-right:1px solid #fff"></div>
<div class="a" style="left:1818px;top:995px;width:67px;height:24px;border-top:1px solid #a0a0a0;border-left:1px solid #a0a0a0;border-right:1px solid #fff"></div>
<div class="a" style="left:1890px;top:995px;width:30px;height:24px;border-top:1px solid #a0a0a0;border-left:1px solid #a0a0a0;border-right:1px solid #fff"></div>
<svg class="a" style="left:426px;top:1001px" width="26" height="12"><path d="M0 4.5H4M0 7.5H4M20 4.5H25M20 7.5H25" stroke="#000" stroke-width="1.6"/><path d="M4 1H9V11H4Z" fill="#e0e0e0" stroke="#000" stroke-width="2.2" stroke-linejoin="round"/><path d="M15 1H19A2 2 0 0 1 20 3V9A2 2 0 0 1 19 11H15A3 3 0 0 1 14 9V3A3 3 0 0 1 15 1Z" fill="#e0e0e0" stroke="#000" stroke-width="2.2"/></svg>
<svg class="a" style="left:453.0px;top:992.0px;overflow:visible" width="251.5" height="27.4"><text x="2.6" y="21.6" font-size="19.6" font-family="Liberation Sans" font-weight="normal" fill="#1b1b1b" textLength="245.5" lengthAdjust="spacingAndGlyphs">NTRIP client: Not connected</text></svg>
<svg class="a" style="left:780px;top:1001px" width="26" height="12"><path d="M0 4.5H4M0 7.5H4M20 4.5H25M20 7.5H25" stroke="#000" stroke-width="1.6"/><path d="M4 1H9V11H4Z" fill="#e0e0e0" stroke="#000" stroke-width="2.2" stroke-linejoin="round"/><path d="M15 1H19A2 2 0 0 1 20 3V9A2 2 0 0 1 19 11H15A3 3 0 0 1 14 9V3A3 3 0 0 1 15 1Z" fill="#e0e0e0" stroke="#000" stroke-width="2.2"/></svg>
<svg class="a" style="left:807.6px;top:992.0px;overflow:visible" width="251.2" height="27.4"><text x="2.6" y="21.6" font-size="19.6" font-family="Liberation Sans" font-weight="normal" fill="#1b1b1b" textLength="245.2" lengthAdjust="spacingAndGlyphs">MQTT client: Not connected</text></svg>
<div class="a" style="left:1144px;top:995px;width:170px;height:24px;overflow:hidden"><div class="t" style="left:1px;top:3px;font-size:19.6px;letter-spacing:0.15px;color:#1b1b1b">u-blox Generation 1</div></div>
<svg class="a" style="left:1322px;top:999px" width="26" height="16"><path d="M0 8H26" stroke="#000" stroke-width="2"/><path d="M0 5.5H5M0 10.5H5M21 5.5H26M21 10.5H26" stroke="#000" stroke-width="1.3"/><rect x="6" y="2" width="14" height="12" rx="4" fill="#00e000" stroke="#000" stroke-width="1.6"/><path d="M13 2V14" stroke="#000" stroke-width="1.6"/></svg>
<svg class="a" style="left:1350.8px;top:992.0px;overflow:visible" width="130.2" height="27.4"><text x="2.6" y="21.6" font-size="19.6" font-family="Liberation Sans" font-weight="normal" fill="#1b1b1b" textLength="124.2" lengthAdjust="spacingAndGlyphs">COM23 38400</text></svg>
<svg class="a" style="left:1482.8px;top:992.0px;overflow:visible" width="115.3" height="27.4"><text x="2.6" y="21.6" font-size="19.6" font-family="Liberation Sans" font-weight="normal" fill="#1b1b1b" textLength="109.3" lengthAdjust="spacingAndGlyphs">No file open</text></svg>
<svg class="a" style="left:1674.6px;top:992.0px;overflow:visible" width="61.7" height="27.4"><text x="2.6" y="21.6" font-size="19.6" font-family="Liberation Sans" font-weight="normal" fill="#1b1b1b" textLength="55.7" lengthAdjust="spacingAndGlyphs">NMEA</text></svg>
<div class="a" style="left:1747px;top:995px;width:65px;height:24px;overflow:hidden"><div class="t" style="left:2px;top:3px;font-size:19.6px;color:#1b1b1b">00:08:07</div></div>
<div class="a" style="left:1819px;top:995px;width:65px;height:24px;overflow:hidden"><div class="t" style="left:2px;top:3px;font-size:19.6px;color:#1b1b1b">09:24:36</div></div>
<svg class="a" style="left:1896px;top:998px" width="18" height="18"><circle cx="9" cy="9" r="7" fill="#7a8a7a"/><circle cx="9" cy="9" r="5.6" fill="#18e018"/></svg></body></html>
